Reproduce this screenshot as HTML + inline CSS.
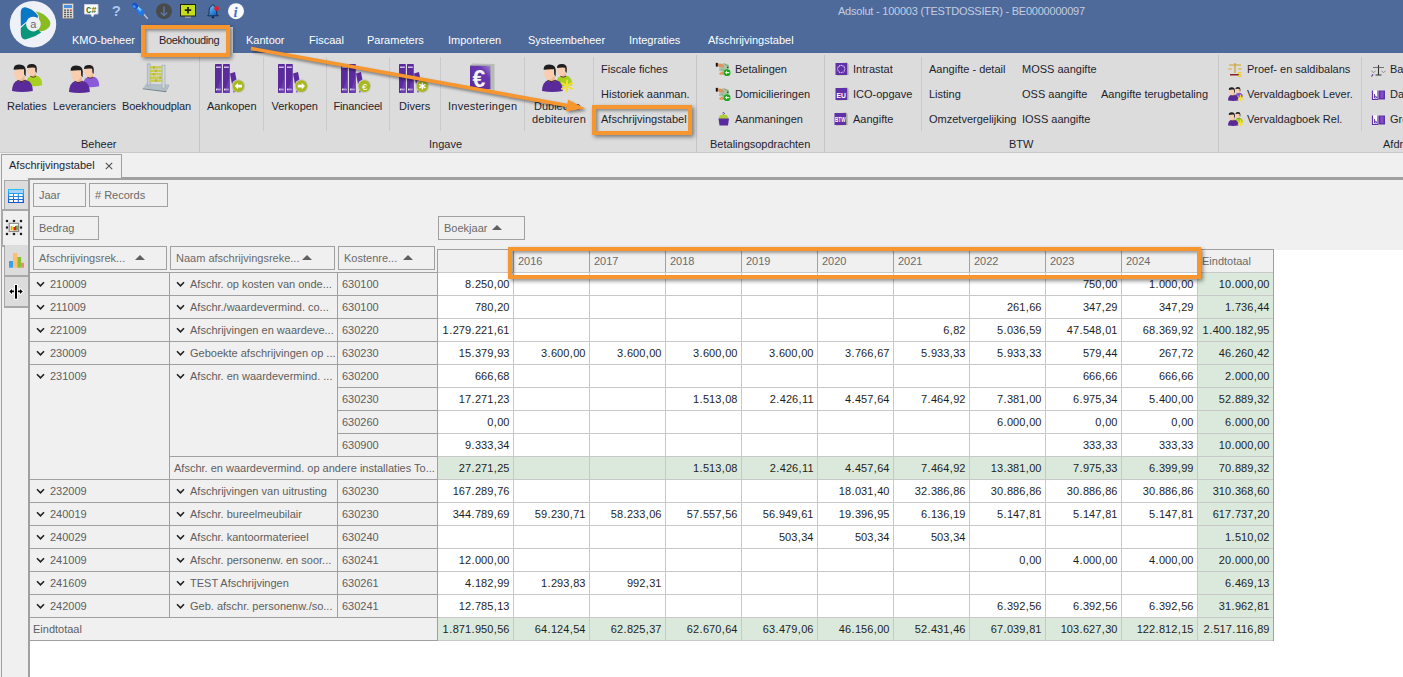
<!DOCTYPE html><html><head><meta charset="utf-8"><style>
*{box-sizing:border-box;margin:0;padding:0}
html,body{width:1403px;height:677px;overflow:hidden;background:#f0f0f0;font-family:"Liberation Sans", sans-serif;font-size:11px;color:#1e1e1e}
.a{position:absolute}
.t{position:absolute;white-space:nowrap;line-height:13px}
.n i{font-style:normal;padding:0 0.45px}
</style></head><body>
<div class="a" style="left:0;top:0;width:1403px;height:53px;background:#4d6a9b"></div>
<div class="a" style="left:0;top:53px;width:1403px;height:100px;background:#dcdcdc;border-bottom:1px solid #c8c8c8"></div>
<div class="t" style="left:72px;top:34px;color:#fff;font-size:11px">KMO-beheer</div>
<div class="t" style="left:246px;top:34px;color:#fff;font-size:11px">Kantoor</div>
<div class="t" style="left:309px;top:34px;color:#fff;font-size:11px">Fiscaal</div>
<div class="t" style="left:367px;top:34px;color:#fff;font-size:11px">Parameters</div>
<div class="t" style="left:448px;top:34px;color:#fff;font-size:11px">Importeren</div>
<div class="t" style="left:528px;top:34px;color:#fff;font-size:11px">Systeembeheer</div>
<div class="t" style="left:629px;top:34px;color:#fff;font-size:11px">Integraties</div>
<div class="t" style="left:708px;top:34px;color:#fff;font-size:11px">Afschrijvingstabel</div>
<div class="a" style="left:145px;top:27px;width:88px;height:27px;background:#dcdcdc"></div>
<div class="t" style="left:159px;top:34px;color:#1e1e2e;letter-spacing:-0.35px">Boekhouding</div>
<div class="t" style="left:838px;top:5px;color:#c4cde0;font-size:11px;letter-spacing:-0.22px">Adsolut - 100003 (TESTDOSSIER) - BE0000000097</div>
<div class="t" style="left:7px;top:100px;color:#1e1e2e;letter-spacing:0px">Relaties</div>
<div class="t" style="left:53px;top:100px;color:#1e1e2e;letter-spacing:0px">Leveranciers</div>
<div class="t" style="left:122px;top:100px;color:#1e1e2e;letter-spacing:-0.1px">Boekhoudplan</div>
<div class="t" style="left:207px;top:100px;color:#1e1e2e;letter-spacing:0px">Aankopen</div>
<div class="t" style="left:271.5px;top:100px;color:#1e1e2e;letter-spacing:0px">Verkopen</div>
<div class="t" style="left:333.5px;top:100px;color:#1e1e2e;letter-spacing:-0.15px">Financieel</div>
<div class="t" style="left:399px;top:100px;color:#1e1e2e;letter-spacing:0px">Divers</div>
<div class="t" style="left:448px;top:100px;color:#1e1e2e;letter-spacing:0.25px">Investeringen</div>
<div class="t" style="left:534px;top:100px;color:#1e1e2e;">Dubieuze</div>
<div class="t" style="left:532px;top:113px;color:#1e1e2e;letter-spacing:0.2px">debiteuren</div>
<div class="t" style="left:601px;top:63px;color:#1e1e2e;">Fiscale fiches</div>
<div class="t" style="left:601px;top:88px;color:#1e1e2e;">Historiek aanman.</div>
<div class="t" style="left:601px;top:113px;color:#1e1e2e;">Afschrijvingstabel</div>
<div class="t" style="left:735px;top:63px;color:#1e1e2e;">Betalingen</div>
<div class="t" style="left:735px;top:88px;color:#1e1e2e;">Domicilieringen</div>
<div class="t" style="left:735px;top:113px;color:#1e1e2e;">Aanmaningen</div>
<div class="t" style="left:853px;top:63px;color:#1e1e2e;">Intrastat</div>
<div class="t" style="left:853px;top:88px;color:#1e1e2e;">ICO-opgave</div>
<div class="t" style="left:853px;top:113px;color:#1e1e2e;">Aangifte</div>
<div class="t" style="left:929px;top:63px;color:#1e1e2e;">Aangifte - detail</div>
<div class="t" style="left:929px;top:88px;color:#1e1e2e;">Listing</div>
<div class="t" style="left:929px;top:113px;color:#1e1e2e;">Omzetvergelijking</div>
<div class="t" style="left:1022px;top:63px;color:#1e1e2e;">MOSS aangifte</div>
<div class="t" style="left:1022px;top:88px;color:#1e1e2e;">OSS aangifte</div>
<div class="t" style="left:1022px;top:113px;color:#1e1e2e;">IOSS aangifte</div>
<div class="t" style="left:1101px;top:88px;color:#1e1e2e;">Aangifte terugbetaling</div>
<div class="t" style="left:1247px;top:63px;color:#1e1e2e;">Proef- en saldibalans</div>
<div class="t" style="left:1247px;top:88px;color:#1e1e2e;">Vervaldagboek Lever.</div>
<div class="t" style="left:1247px;top:113px;color:#1e1e2e;">Vervaldagboek Rel.</div>
<div class="t" style="left:1390px;top:63px;color:#1e1e2e;">Balans</div>
<div class="t" style="left:1390px;top:88px;color:#1e1e2e;">Dagboeken</div>
<div class="t" style="left:1390px;top:113px;color:#1e1e2e;">Grootboek</div>
<div class="t" style="left:81px;top:138px;color:#1e1e2e;">Beheer</div>
<div class="t" style="left:429px;top:138px;color:#1e1e2e;">Ingave</div>
<div class="t" style="left:710px;top:138px;color:#1e1e2e;">Betalingsopdrachten</div>
<div class="t" style="left:1009px;top:138px;color:#1e1e2e;">BTW</div>
<div class="t" style="left:1383px;top:138px;color:#1e1e2e;">Afdrukken</div>
<div class="a" style="left:199px;top:55px;width:1px;height:97px;background:#c6c6c6"></div>
<div class="a" style="left:696px;top:55px;width:1px;height:97px;background:#c6c6c6"></div>
<div class="a" style="left:824px;top:55px;width:1px;height:97px;background:#c6c6c6"></div>
<div class="a" style="left:1218px;top:55px;width:1px;height:97px;background:#c6c6c6"></div>
<div class="a" style="left:263px;top:57px;width:1px;height:74px;background:#cacaca"></div>
<div class="a" style="left:326px;top:57px;width:1px;height:74px;background:#cacaca"></div>
<div class="a" style="left:389px;top:57px;width:1px;height:74px;background:#cacaca"></div>
<div class="a" style="left:440px;top:57px;width:1px;height:74px;background:#cacaca"></div>
<div class="a" style="left:524px;top:57px;width:1px;height:74px;background:#cacaca"></div>
<div class="a" style="left:593px;top:57px;width:1px;height:74px;background:#cacaca"></div>
<div class="a" style="left:921px;top:57px;width:1px;height:74px;background:#cacaca"></div>
<div class="a" style="left:1361px;top:57px;width:1px;height:74px;background:#cacaca"></div>
<svg class="a" style="left:8px;top:0px;overflow:visible" width="50" height="50" viewBox="0 0 50 50"><circle cx="25" cy="24.2" r="23.2" fill="#eef1f8"/><path d="M12.8,26.3 L12.7,13.5 Q12.6,5.4 19.8,7.9 Q26.5,10.2 29.6,15.2 Q30.5,16.8 29.38,17.88 A7.3,7.3 0 0 0 18.46,21.74 L12.8,26.3 Z" fill="#0b78c6"/><path d="M27.6,11.2 Q36.5,13 41.2,20 Q43.6,23.5 41.2,27 Q36.5,32.5 27,31.4 L28.13,30.77 A7.3,7.3 0 0 0 30.99,19.31 Q31.5,15 27.6,11.2 Z" fill="#89bc22"/><path d="M18.17,22.98 L12.8,27.9 L12.8,33 Q13,41.6 20.5,38.6 Q28,36.2 33.2,32.4 Q31.8,31.5 30.09,29.59 A7.3,7.3 0 0 1 18.17,22.98 Z" fill="#09967a"/><text x="25.4" y="27.8" text-anchor="middle" font-family="Liberation Sans" font-size="11" fill="#6a6a6a">a</text></svg>
<svg class="a" style="left:62px;top:3px;overflow:visible" width="12" height="16" viewBox="0 0 12 16"><rect x="0.5" y="0.5" width="11" height="15" rx="1" fill="#dcdcdc" stroke="#8a8a8a"/><rect x="2" y="2" width="8" height="3" fill="#4a90e0"/><rect x="2.0" y="6.5" width="2" height="1.3" fill="#555"/><rect x="4.9" y="6.5" width="2" height="1.3" fill="#555"/><rect x="7.8" y="6.5" width="2" height="1.3" fill="#e03030"/><rect x="2.0" y="8.7" width="2" height="1.3" fill="#555"/><rect x="4.9" y="8.7" width="2" height="1.3" fill="#555"/><rect x="7.8" y="8.7" width="2" height="1.3" fill="#555"/><rect x="2.0" y="10.9" width="2" height="1.3" fill="#555"/><rect x="4.9" y="10.9" width="2" height="1.3" fill="#555"/><rect x="7.8" y="10.9" width="2" height="1.3" fill="#555"/><rect x="2.0" y="13.1" width="2" height="1.3" fill="#555"/><rect x="4.9" y="13.1" width="2" height="1.3" fill="#555"/><rect x="7.8" y="13.1" width="2" height="1.3" fill="#555"/></svg><svg class="a" style="left:84px;top:4px;overflow:visible" width="15" height="14" viewBox="0 0 15 14"><path d="M0.5,0.5 H14 V10 H10.5 L8.5,13 L6.5,10 H0.5 Z" fill="#fff" stroke="#c8d0e8"/><text x="2" y="8.8" textLength="10.5" lengthAdjust="spacingAndGlyphs" font-family="Liberation Mono" font-weight="bold" font-size="9.5" fill="#467412">C#</text></svg><svg class="a" style="left:112px;top:4px;overflow:visible" width="9" height="13" viewBox="0 0 9 13"><text x="4.3" y="12.3" text-anchor="middle" font-family="Liberation Sans" font-weight="bold" font-size="15" fill="#a8c6ee">?</text></svg><svg class="a" style="left:128px;top:0px;overflow:visible" width="24" height="22" viewBox="0 0 24 22"><line x1="15" y1="13.3" x2="19.7" y2="18.7" stroke="#c8c8c8" stroke-width="1.3"/><ellipse cx="12.5" cy="11.6" rx="4.6" ry="2.9" transform="rotate(45 12.5 11.6)" fill="#1e78e8"/><path d="M8.5,6.5 L13.2,11" stroke="#48a8f8" stroke-width="3"/><path d="M9.5,6.8 L12.5,9.8" stroke="#e0f4ff" stroke-width="1"/><ellipse cx="7.1" cy="5.8" rx="3.2" ry="2.7" transform="rotate(45 7.1 5.8)" fill="#1650d0"/><ellipse cx="6.2" cy="6.6" rx="1.8" ry="1.4" transform="rotate(45 6.2 6.6)" fill="#3a90f0"/></svg><svg class="a" style="left:156px;top:3px;overflow:visible" width="16" height="17" viewBox="0 0 16 17"><circle cx="8" cy="8.2" r="8" fill="#4a4a4a"/><path d="M8,3.5 V12.5 M4.8,9.5 L8,12.7 L11.2,9.5" stroke="#5a7bb0" stroke-width="1.3" fill="none"/></svg><svg class="a" style="left:180px;top:4px;overflow:visible" width="16" height="14" viewBox="0 0 16 14"><rect x="0.5" y="0.5" width="15" height="11.5" fill="#c4de1c" stroke="#20200c"/><path d="M8,3 V9.5 M4.8,6.2 H11.2" stroke="#20200c" stroke-width="1.8"/><rect x="5" y="12.7" width="6" height="1.2" fill="#a0a0a0"/></svg><svg class="a" style="left:207px;top:4px;overflow:visible" width="12" height="15" viewBox="0 0 12 15"><defs><linearGradient id="bg1" x1="0" y1="0" x2="1" y2="1"><stop offset="0" stop-color="#9ad4ff"/><stop offset="0.5" stop-color="#3a90e0"/><stop offset="1" stop-color="#1050a8"/></linearGradient></defs><path d="M5.8,0.6 L6.6,1.6 Q9.6,2.6 9.7,6.2 L9.8,10.2 L11.2,11.8 H0.6 L2,10.2 L2.1,6.2 Q2.2,2.6 5.2,1.6 Z" fill="url(#bg1)" stroke="#0a2848" stroke-width="0.9"/><ellipse cx="5.9" cy="13.3" rx="1.4" ry="1.1" fill="#0a2848"/><circle cx="9.6" cy="4.4" r="2.3" fill="#e81c28"/></svg><svg class="a" style="left:228px;top:3px;overflow:visible" width="16" height="17" viewBox="0 0 16 17"><circle cx="8" cy="8.2" r="8" fill="#fafafa"/><text x="7.6" y="14.2" text-anchor="middle" font-family="Liberation Serif" font-style="italic" font-weight="bold" font-size="14.5" fill="#4a6cd0">i</text></svg>
<svg class="a" style="left:8px;top:58px;overflow:visible" width="40.0" height="40.0" viewBox="0 0 40.0 40.0"><g transform="scale(1.0)"><path d="M17.8,27.5 Q17.8,19.5 23,18 L30,18 Q34.2,20.5 34.2,27.2 Q26,29 17.8,27.5 Z" fill="#a8d020"/><rect x="22.5" y="14" width="5.5" height="5" fill="#eeb48c"/><path d="M22.3,18.2 Q25,20.3 28.2,18.2" stroke="#302020" stroke-width="0.8" fill="none"/><ellipse cx="23.6" cy="12.4" rx="4.4" ry="5.6" fill="#f8cdb0"/><path d="M19,9.2 Q19.5,5.8 24,6 Q28.8,6.2 28.8,10.5 L28.6,15 L27.4,13.5 L27.2,9.8 Q24,9.3 19.2,10 Z" fill="#1e1e1e"/><path d="M4,33 Q4,24.5 9.8,22.2 L18.5,22.2 Q24.8,24 24.8,33 Q14,34.8 4,33 Z" fill="#5a2a9a"/><rect x="10.2" y="18" width="6.5" height="5.3" fill="#eeb48c"/><path d="M9.6,22.3 Q13,25.2 17.6,22.2" stroke="#302020" stroke-width="0.9" fill="none"/><ellipse cx="11.2" cy="15.6" rx="5.1" ry="6.3" fill="#f8cdb0"/><path d="M5.6,11 Q5.8,6.6 11.5,6.6 Q17.6,6.8 17.8,12.5 L17.6,18.5 L16.2,16.5 L16,11.3 Q11,10.8 5.8,11.8 Z" fill="#1e1e1e"/></g></svg>
<svg class="a" style="left:65px;top:59px;overflow:visible" width="40.0" height="40.0" viewBox="0 0 40.0 40.0"><g transform="scale(1.0)"><path d="M17.8,27.5 Q17.8,19.5 23,18 L30,18 Q34.2,20.5 34.2,27.2 Q26,29 17.8,27.5 Z" fill="#8a5ad8"/><rect x="22.5" y="14" width="5.5" height="5" fill="#eeb48c"/><path d="M22.3,18.2 Q25,20.3 28.2,18.2" stroke="#302020" stroke-width="0.8" fill="none"/><ellipse cx="23.6" cy="12.4" rx="4.4" ry="5.6" fill="#f8cdb0"/><path d="M19,9.2 Q19.5,5.8 24,6 Q28.8,6.2 28.8,10.5 L28.6,15 L27.4,13.5 L27.2,9.8 Q24,9.3 19.2,10 Z" fill="#1e1e1e"/><path d="M4,33 Q4,24.5 9.8,22.2 L18.5,22.2 Q24.8,24 24.8,33 Q14,34.8 4,33 Z" fill="#5a2a9a"/><rect x="10.2" y="18" width="6.5" height="5.3" fill="#eeb48c"/><path d="M9.6,22.3 Q13,25.2 17.6,22.2" stroke="#302020" stroke-width="0.9" fill="none"/><ellipse cx="11.2" cy="15.6" rx="5.1" ry="6.3" fill="#f8cdb0"/><path d="M5.6,11 Q5.8,6.6 11.5,6.6 Q17.6,6.8 17.8,12.5 L17.6,18.5 L16.2,16.5 L16,11.3 Q11,10.8 5.8,11.8 Z" fill="#1e1e1e"/></g></svg>
<svg class="a" style="left:136px;top:58px;overflow:visible" width="40" height="40" viewBox="0 0 40 40"><path d="M6.8,30.2 L10.5,25.4 L33.1,26.5 L30,33.1 Z" fill="#b4c0c8"/><path d="M6.8,30.2 L30,33.1 L30,34.2 L6.8,31.3 Z" fill="#7a8690"/><path d="M30,33.1 L33.1,26.5 L33.1,27.6 L30,34.2 Z" fill="#8a969e"/><rect x="11.2" y="5.9" width="3" height="21.9" fill="#c4ccd4" stroke="#98a4ac" stroke-width="0.6"/><rect x="26" y="7.1" width="3" height="23" fill="#d0d8de" stroke="#98a4ac" stroke-width="0.6"/><ellipse cx="15.00" cy="9.4" rx="1.15" ry="1.45" fill="#c6cc44"/><ellipse cx="17.05" cy="9.4" rx="1.15" ry="1.45" fill="#c6cc44"/><rect x="17.75" y="8.200000000000001" width="0.9" height="2.4" fill="#8a3a18"/><ellipse cx="19.10" cy="9.4" rx="1.15" ry="1.45" fill="#c6cc44"/><ellipse cx="21.15" cy="9.4" rx="1.15" ry="1.45" fill="#c6cc44"/><ellipse cx="23.20" cy="9.4" rx="1.15" ry="1.45" fill="#c6cc44"/><ellipse cx="25.25" cy="9.4" rx="1.15" ry="1.45" fill="#c6cc44"/><ellipse cx="15.00" cy="12.9" rx="1.15" ry="1.45" fill="#c6cc44"/><ellipse cx="17.05" cy="12.9" rx="1.15" ry="1.45" fill="#c6cc44"/><ellipse cx="19.10" cy="12.9" rx="1.15" ry="1.45" fill="#c6cc44"/><rect x="19.80" y="11.700000000000001" width="0.9" height="2.4" fill="#8a3a18"/><ellipse cx="21.15" cy="12.9" rx="1.15" ry="1.45" fill="#c6cc44"/><ellipse cx="23.20" cy="12.9" rx="1.15" ry="1.45" fill="#c6cc44"/><ellipse cx="25.25" cy="12.9" rx="1.15" ry="1.45" fill="#c6cc44"/><ellipse cx="15.00" cy="16.2" rx="1.15" ry="1.45" fill="#c6cc44"/><ellipse cx="17.05" cy="16.2" rx="1.15" ry="1.45" fill="#c6cc44"/><rect x="17.75" y="15.0" width="0.9" height="2.4" fill="#8a3a18"/><ellipse cx="19.10" cy="16.2" rx="1.15" ry="1.45" fill="#c6cc44"/><ellipse cx="21.15" cy="16.2" rx="1.15" ry="1.45" fill="#c6cc44"/><ellipse cx="23.20" cy="16.2" rx="1.15" ry="1.45" fill="#c6cc44"/><ellipse cx="25.25" cy="16.2" rx="1.15" ry="1.45" fill="#c6cc44"/><ellipse cx="15.00" cy="19.7" rx="1.15" ry="1.45" fill="#c6cc44"/><ellipse cx="17.05" cy="19.7" rx="1.15" ry="1.45" fill="#c6cc44"/><ellipse cx="19.10" cy="19.7" rx="1.15" ry="1.45" fill="#c6cc44"/><ellipse cx="21.15" cy="19.7" rx="1.15" ry="1.45" fill="#c6cc44"/><ellipse cx="23.20" cy="19.7" rx="1.15" ry="1.45" fill="#c6cc44"/><rect x="23.90" y="18.5" width="0.9" height="2.4" fill="#8a3a18"/><ellipse cx="25.25" cy="19.7" rx="1.15" ry="1.45" fill="#c6cc44"/><ellipse cx="15.00" cy="22.7" rx="1.15" ry="1.45" fill="#c6cc44"/><ellipse cx="17.05" cy="22.7" rx="1.15" ry="1.45" fill="#c6cc44"/><ellipse cx="19.10" cy="22.7" rx="1.15" ry="1.45" fill="#c6cc44"/><rect x="19.80" y="21.5" width="0.9" height="2.4" fill="#8a3a18"/><ellipse cx="21.15" cy="22.7" rx="1.15" ry="1.45" fill="#c6cc44"/><ellipse cx="23.20" cy="22.7" rx="1.15" ry="1.45" fill="#c6cc44"/><ellipse cx="25.25" cy="22.7" rx="1.15" ry="1.45" fill="#c6cc44"/></svg>
<svg class="a" style="left:210px;top:58px;overflow:visible" width="40" height="40" viewBox="0 0 40 40"><rect x="5" y="5.9" width="6.8" height="29" rx="0.6" fill="#5b2b9e"/><rect x="6" y="8.6" width="4.8" height="1.2" fill="#e8e0f4"/><rect x="6" y="30.6" width="4.8" height="1.8" fill="#e8e0f4"/><path d="M11.8,18 L11.8,34.9 L6,34.9 Z" fill="#7a4ec0" opacity=".5"/><rect x="13" y="5.9" width="6.8" height="29" rx="0.6" fill="#5b2b9e"/><rect x="14" y="8.6" width="4.8" height="1.2" fill="#e8e0f4"/><rect x="14" y="30.6" width="4.8" height="1.8" fill="#e8e0f4"/><path d="M19.8,18 L19.8,34.9 L14,34.9 Z" fill="#7a4ec0" opacity=".5"/><path d="M20,15.5 L25,14 L28.5,33 L23.5,34.5 Z" fill="#5b2b9e"/><circle cx="28.4" cy="28.1" r="6.8" fill="#c8c8c0"/><circle cx="28.4" cy="28.1" r="5.8" fill="#a9b81e"/><path d="M24.8,28.1 L28,25 V26.8 H32 V29.4 H28 V31.2 Z" fill="#fff"/></svg>
<svg class="a" style="left:273px;top:58px;overflow:visible" width="40" height="40" viewBox="0 0 40 40"><rect x="5" y="5.9" width="6.8" height="29" rx="0.6" fill="#5b2b9e"/><rect x="6" y="8.6" width="4.8" height="1.2" fill="#e8e0f4"/><rect x="6" y="30.6" width="4.8" height="1.8" fill="#e8e0f4"/><path d="M11.8,18 L11.8,34.9 L6,34.9 Z" fill="#7a4ec0" opacity=".5"/><rect x="13" y="5.9" width="6.8" height="29" rx="0.6" fill="#5b2b9e"/><rect x="14" y="8.6" width="4.8" height="1.2" fill="#e8e0f4"/><rect x="14" y="30.6" width="4.8" height="1.8" fill="#e8e0f4"/><path d="M19.8,18 L19.8,34.9 L14,34.9 Z" fill="#7a4ec0" opacity=".5"/><path d="M20,15.5 L25,14 L28.5,33 L23.5,34.5 Z" fill="#5b2b9e"/><circle cx="28.4" cy="28.1" r="6.8" fill="#c8c8c0"/><circle cx="28.4" cy="28.1" r="5.8" fill="#a9b81e"/><path d="M32,28.1 L28.8,25 V26.8 H24.8 V29.4 H28.8 V31.2 Z" fill="#fff"/></svg>
<svg class="a" style="left:336px;top:58px;overflow:visible" width="40" height="40" viewBox="0 0 40 40"><rect x="5" y="5.9" width="6.8" height="29" rx="0.6" fill="#5b2b9e"/><rect x="6" y="8.6" width="4.8" height="1.2" fill="#e8e0f4"/><rect x="6" y="30.6" width="4.8" height="1.8" fill="#e8e0f4"/><path d="M11.8,18 L11.8,34.9 L6,34.9 Z" fill="#7a4ec0" opacity=".5"/><rect x="13" y="5.9" width="6.8" height="29" rx="0.6" fill="#5b2b9e"/><rect x="14" y="8.6" width="4.8" height="1.2" fill="#e8e0f4"/><rect x="14" y="30.6" width="4.8" height="1.8" fill="#e8e0f4"/><path d="M19.8,18 L19.8,34.9 L14,34.9 Z" fill="#7a4ec0" opacity=".5"/><path d="M20,15.5 L25,14 L28.5,33 L23.5,34.5 Z" fill="#5b2b9e"/><circle cx="28.4" cy="28.1" r="6.8" fill="#c8c8c0"/><circle cx="28.4" cy="28.1" r="5.8" fill="#a9b81e"/><text x="28.6" y="31.8" text-anchor="middle" font-family="Liberation Sans" font-size="9.5" fill="#fff">&#8364;</text></svg>
<svg class="a" style="left:394px;top:58px;overflow:visible" width="40" height="40" viewBox="0 0 40 40"><rect x="5" y="5.9" width="6.8" height="29" rx="0.6" fill="#5b2b9e"/><rect x="6" y="8.6" width="4.8" height="1.2" fill="#e8e0f4"/><rect x="6" y="30.6" width="4.8" height="1.8" fill="#e8e0f4"/><path d="M11.8,18 L11.8,34.9 L6,34.9 Z" fill="#7a4ec0" opacity=".5"/><rect x="13" y="5.9" width="6.8" height="29" rx="0.6" fill="#5b2b9e"/><rect x="14" y="8.6" width="4.8" height="1.2" fill="#e8e0f4"/><rect x="14" y="30.6" width="4.8" height="1.8" fill="#e8e0f4"/><path d="M19.8,18 L19.8,34.9 L14,34.9 Z" fill="#7a4ec0" opacity=".5"/><path d="M20,15.5 L25,14 L28.5,33 L23.5,34.5 Z" fill="#5b2b9e"/><circle cx="28.4" cy="28.1" r="6.8" fill="#c8c8c0"/><circle cx="28.4" cy="28.1" r="5.8" fill="#a9b81e"/><g stroke="#fff" stroke-width="1.3"><path d="M28.4,24.6 V31.6 M25.3,26.3 L31.5,29.9 M25.3,29.9 L31.5,26.3"/></g></svg>
<svg class="a" style="left:462px;top:58px;overflow:visible" width="40" height="40" viewBox="0 0 40 40"><path d="M8,7.7 L10,5.6 L32.5,5.9 L32.5,32 L28.4,31.3 Z" fill="#b4bcb4"/><defs><linearGradient id="ig" x1="0" y1="1" x2="1" y2="0"><stop offset="0" stop-color="#5a2898"/><stop offset="0.7" stop-color="#6838b0"/><stop offset="1" stop-color="#a080d0"/></linearGradient></defs><rect x="8" y="7.7" width="20.4" height="23.6" fill="url(#ig)"/><text x="16.8" y="28.8" text-anchor="middle" font-family="Liberation Sans" font-weight="bold" font-size="23" fill="#f4f4f4">&#8364;</text></svg>
<svg class="a" style="left:538px;top:58px;overflow:visible" width="40.0" height="40.0" viewBox="0 0 40.0 40.0"><g transform="scale(1.0)"><path d="M17.8,27.5 Q17.8,19.5 23,18 L30,18 Q34.2,20.5 34.2,27.2 Q26,29 17.8,27.5 Z" fill="#a8d020"/><rect x="22.5" y="14" width="5.5" height="5" fill="#eeb48c"/><path d="M22.3,18.2 Q25,20.3 28.2,18.2" stroke="#302020" stroke-width="0.8" fill="none"/><ellipse cx="23.6" cy="12.4" rx="4.4" ry="5.6" fill="#f8cdb0"/><path d="M19,9.2 Q19.5,5.8 24,6 Q28.8,6.2 28.8,10.5 L28.6,15 L27.4,13.5 L27.2,9.8 Q24,9.3 19.2,10 Z" fill="#1e1e1e"/><path d="M4,33 Q4,24.5 9.8,22.2 L18.5,22.2 Q24.8,24 24.8,33 Q14,34.8 4,33 Z" fill="#5a2a9a"/><rect x="10.2" y="18" width="6.5" height="5.3" fill="#eeb48c"/><path d="M9.6,22.3 Q13,25.2 17.6,22.2" stroke="#302020" stroke-width="0.9" fill="none"/><ellipse cx="11.2" cy="15.6" rx="5.1" ry="6.3" fill="#f8cdb0"/><path d="M5.6,11 Q5.8,6.6 11.5,6.6 Q17.6,6.8 17.8,12.5 L17.6,18.5 L16.2,16.5 L16,11.3 Q11,10.8 5.8,11.8 Z" fill="#1e1e1e"/><g stroke="#f0e030" stroke-width="2" stroke-linecap="round"><path d="M29,22.5 V33.5 M24,25.2 L34,30.8 M24,30.8 L34,25.2"/></g></g></svg>
<svg class="a" style="left:712px;top:60px;overflow:visible" width="20" height="18" viewBox="0 0 20 18"><path d="M7.5,5 L12,3 L17,5 L16.5,9 L12,12 L7,11 Z" fill="#a8c4a4"/><path d="M12.5,4 L16.5,6 M9,9 L12,10.5" stroke="#7aa07a" stroke-width="0.8"/><circle cx="15.8" cy="7.3" r="0.9" fill="#2a4a2a"/><rect x="3.8" y="2.8" width="2.1" height="4" rx="0.8" fill="#111"/><path d="M5.9,3.6 Q9,3.2 11.5,5 Q12.5,6.5 11.5,7.4 L8,7 L5.9,6.3 Z" fill="#e0925c"/><path d="M7,13.5 Q9,11.5 11.5,11.8 L12.5,14.8 L8,14.8 Z" fill="#e0925c"/><circle cx="15.1" cy="12.7" r="3.4" fill="#1aa81a"/><path d="M13,12.6 L15,10.8 V11.9 H17.3 V13.3 H15 V14.4 Z" fill="#e8f8e8"/></svg>
<svg class="a" style="left:712px;top:85px;overflow:visible" width="20" height="18" viewBox="0 0 20 18"><path d="M7.5,5 L12,3 L17,5 L16.5,9 L12,12 L7,11 Z" fill="#a8c4a4"/><path d="M12.5,4 L16.5,6 M9,9 L12,10.5" stroke="#7aa07a" stroke-width="0.8"/><circle cx="15.8" cy="7.3" r="0.9" fill="#2a4a2a"/><rect x="3.8" y="2.8" width="2.1" height="4" rx="0.8" fill="#111"/><path d="M5.9,3.6 Q9,3.2 11.5,5 Q12.5,6.5 11.5,7.4 L8,7 L5.9,6.3 Z" fill="#e0925c"/><path d="M7,13.5 Q9,11.5 11.5,11.8 L12.5,14.8 L8,14.8 Z" fill="#e0925c"/><circle cx="15.1" cy="12.7" r="3.4" fill="#1aa81a"/><path d="M13,12.6 L15,10.8 V11.9 H17.3 V13.3 H15 V14.4 Z" fill="#e8f8e8"/></svg>
<svg class="a" style="left:718px;top:112px;overflow:visible" width="12" height="14" viewBox="0 0 12 14"><ellipse cx="5.5" cy="6" rx="4.6" ry="3.5" fill="#b0d030"/><path d="M0.5,6.5 H11 L10,13.5 H1.5 Z" fill="#5a2aa0"/><path d="M4.5,1 Q6,0 6.5,1.5 L5.5,2.5" stroke="#5a2aa0" stroke-width="1" fill="none"/></svg>
<svg class="a" style="left:835px;top:62px;overflow:visible" width="14" height="14" viewBox="0 0 14 14"><path d="M1,1.5 L12,0.5 L13.5,2 L13.5,13 L2,13.5 Z" fill="#a0a890"/><rect x="0.5" y="1" width="11.5" height="12" fill="#6030a8"/><circle cx="9.80" cy="7.00" r="0.6" fill="#fff"/><circle cx="9.32" cy="8.80" r="0.6" fill="#fff"/><circle cx="8.00" cy="10.12" r="0.6" fill="#fff"/><circle cx="6.20" cy="10.60" r="0.6" fill="#fff"/><circle cx="4.40" cy="10.12" r="0.6" fill="#fff"/><circle cx="3.08" cy="8.80" r="0.6" fill="#fff"/><circle cx="2.60" cy="7.00" r="0.6" fill="#fff"/><circle cx="3.08" cy="5.20" r="0.6" fill="#fff"/><circle cx="4.40" cy="3.88" r="0.6" fill="#fff"/><circle cx="6.20" cy="3.40" r="0.6" fill="#fff"/><circle cx="8.00" cy="3.88" r="0.6" fill="#fff"/><circle cx="9.32" cy="5.20" r="0.6" fill="#fff"/></svg>
<svg class="a" style="left:835px;top:87px;overflow:visible" width="14" height="14" viewBox="0 0 14 14"><path d="M1,1.5 L12,0.5 L13.5,2 L13.5,13 L2,13.5 Z" fill="#a0a890"/><rect x="0.5" y="1" width="11.5" height="12" fill="#6030a8"/><text x="1.5" y="10.5" textLength="9.5" lengthAdjust="spacingAndGlyphs" font-family="Liberation Sans" font-weight="bold" font-size="8" fill="#fff">EU</text></svg>
<svg class="a" style="left:834px;top:112px;overflow:visible" width="14" height="14" viewBox="0 0 14 14"><path d="M1,1.5 L12,0.5 L13.5,2 L13.5,13 L2,13.5 Z" fill="#a0a890"/><rect x="0.5" y="1" width="11.5" height="12" fill="#6030a8"/><text x="1" y="10" textLength="10.5" lengthAdjust="spacingAndGlyphs" font-family="Liberation Sans" font-weight="bold" font-size="7" fill="#fff">BTW</text></svg>
<svg class="a" style="left:1227px;top:62px;overflow:visible" width="16" height="16" viewBox="0 0 16 16"><path d="M8,1 V11" stroke="#d0a020" stroke-width="1.2"/><path d="M2,3 H14" stroke="#d0a020" stroke-width="1"/><path d="M0.5,6.5 Q3,9 5.5,6.5 Z M10.5,6.5 Q13,9 15.5,6.5 Z" fill="#e0b030"/><path d="M3,12 H12 V13.5 H3 Z" fill="#902020"/><text x="13" y="15" text-anchor="middle" font-family="Liberation Sans" font-weight="bold" font-size="8" fill="#f0d020">$</text></svg>
<svg class="a" style="left:1225.5px;top:83.5px;overflow:visible" width="20.0" height="20.0" viewBox="0 0 20.0 20.0"><g transform="scale(0.5)"><path d="M17.8,27.5 Q17.8,19.5 23,18 L30,18 Q34.2,20.5 34.2,27.2 Q26,29 17.8,27.5 Z" fill="#8a5ad8"/><rect x="22.5" y="14" width="5.5" height="5" fill="#eeb48c"/><path d="M22.3,18.2 Q25,20.3 28.2,18.2" stroke="#302020" stroke-width="0.8" fill="none"/><ellipse cx="23.6" cy="12.4" rx="4.4" ry="5.6" fill="#f8cdb0"/><path d="M19,9.2 Q19.5,5.8 24,6 Q28.8,6.2 28.8,10.5 L28.6,15 L27.4,13.5 L27.2,9.8 Q24,9.3 19.2,10 Z" fill="#1e1e1e"/><path d="M4,33 Q4,24.5 9.8,22.2 L18.5,22.2 Q24.8,24 24.8,33 Q14,34.8 4,33 Z" fill="#5a2a9a"/><rect x="10.2" y="18" width="6.5" height="5.3" fill="#eeb48c"/><path d="M9.6,22.3 Q13,25.2 17.6,22.2" stroke="#302020" stroke-width="0.9" fill="none"/><ellipse cx="11.2" cy="15.6" rx="5.1" ry="6.3" fill="#f8cdb0"/><path d="M5.6,11 Q5.8,6.6 11.5,6.6 Q17.6,6.8 17.8,12.5 L17.6,18.5 L16.2,16.5 L16,11.3 Q11,10.8 5.8,11.8 Z" fill="#1e1e1e"/><g stroke="#f0e030" stroke-width="2" stroke-linecap="round"><path d="M29,22.5 V33.5 M24,25.2 L34,30.8 M24,30.8 L34,25.2"/></g></g></svg>
<svg class="a" style="left:1225.5px;top:108.5px;overflow:visible" width="20.0" height="20.0" viewBox="0 0 20.0 20.0"><g transform="scale(0.5)"><path d="M17.8,27.5 Q17.8,19.5 23,18 L30,18 Q34.2,20.5 34.2,27.2 Q26,29 17.8,27.5 Z" fill="#a8d020"/><rect x="22.5" y="14" width="5.5" height="5" fill="#eeb48c"/><path d="M22.3,18.2 Q25,20.3 28.2,18.2" stroke="#302020" stroke-width="0.8" fill="none"/><ellipse cx="23.6" cy="12.4" rx="4.4" ry="5.6" fill="#f8cdb0"/><path d="M19,9.2 Q19.5,5.8 24,6 Q28.8,6.2 28.8,10.5 L28.6,15 L27.4,13.5 L27.2,9.8 Q24,9.3 19.2,10 Z" fill="#1e1e1e"/><path d="M4,33 Q4,24.5 9.8,22.2 L18.5,22.2 Q24.8,24 24.8,33 Q14,34.8 4,33 Z" fill="#5a2a9a"/><rect x="10.2" y="18" width="6.5" height="5.3" fill="#eeb48c"/><path d="M9.6,22.3 Q13,25.2 17.6,22.2" stroke="#302020" stroke-width="0.9" fill="none"/><ellipse cx="11.2" cy="15.6" rx="5.1" ry="6.3" fill="#f8cdb0"/><path d="M5.6,11 Q5.8,6.6 11.5,6.6 Q17.6,6.8 17.8,12.5 L17.6,18.5 L16.2,16.5 L16,11.3 Q11,10.8 5.8,11.8 Z" fill="#1e1e1e"/><g stroke="#f0e030" stroke-width="2" stroke-linecap="round"><path d="M29,22.5 V33.5 M24,25.2 L34,30.8 M24,30.8 L34,25.2"/></g></g></svg>
<svg class="a" style="left:1371px;top:64px;overflow:visible" width="15" height="13" viewBox="0 0 15 13"><path d="M7.5,1 V11 M4.5,11 H10.5" stroke="#333" stroke-width="1.1"/><path d="M2,3.5 H13" stroke="#555" stroke-width="0.8"/><path d="M0.5,7 Q2.5,10 4.5,7 M10.5,7 Q12.5,10 14.5,7" stroke="#777" stroke-width="0.8" fill="none"/><path d="M0,12.5 L1.5,10 L2.5,10.5 L1,12.8 Z" fill="#6030a8"/></svg>
<svg class="a" style="left:1372px;top:90px;overflow:visible" width="14" height="10" viewBox="0 0 14 10"><path d="M0.5,0.5 V9.5 H6 V0.5" stroke="#6030a8" stroke-width="1.2" fill="#fff"/><path d="M2.5,4 V8 H4.5 Q5,6 2.5,6" stroke="#6030a8" stroke-width="0.9" fill="none"/><rect x="7" y="0.5" width="6" height="9" fill="#6030a8"/><rect x="8.5" y="1.5" width="3" height="6.5" fill="#8050c8"/></svg>
<svg class="a" style="left:1372px;top:115px;overflow:visible" width="14" height="10" viewBox="0 0 14 10"><path d="M0.5,0.5 V9.5 H6 V0.5" stroke="#6030a8" stroke-width="1.2" fill="#fff"/><path d="M2.5,4 V8 H4.5 Q5,6 2.5,6" stroke="#6030a8" stroke-width="0.9" fill="none"/><rect x="7" y="0.5" width="6" height="9" fill="#6030a8"/><rect x="8.5" y="1.5" width="3" height="6.5" fill="#8050c8"/></svg>
<div class="a" style="left:1px;top:154px;width:121px;height:25px;border:1px solid #a0a0a0;border-bottom:none;background:#f0f0f0"></div>
<div class="t" style="left:9px;top:159px;color:#1e1e2e">Afschrijvingstabel</div>
<svg class="a" style="left:105px;top:162px" width="8" height="8" viewBox="0 0 8 8"><path d="M0.8,0.8 L7.2,7.2 M7.2,0.8 L0.8,7.2" stroke="#505050" stroke-width="1.1"/></svg>
<div class="a" style="left:1px;top:178px;width:1px;height:499px;background:#a0a0a0"></div>
<div class="a" style="left:4px;top:180px;width:25px;height:31px;background:#dcdcdc;border:1px solid #a8a8a8;border-bottom:2px solid #a8a8a8"></div>
<div class="a" style="left:1px;top:209px;width:28px;height:38px;background:#f0f0f0;border:2px solid #a8a8a8;border-right:none"></div>
<div class="a" style="left:4px;top:245px;width:25px;height:32px;background:#dcdcdc;border:1px solid #a8a8a8;border-top:none;border-bottom:2px solid #a8a8a8"></div>
<div class="a" style="left:4px;top:277px;width:25px;height:31px;background:#dcdcdc;border:1px solid #a8a8a8;border-top:none;border-bottom:2px solid #a8a8a8"></div>
<svg class="a" style="left:8px;top:189px;overflow:visible" width="16" height="14" viewBox="0 0 16 14"><defs><linearGradient id="tg" x1="0" y1="0" x2="0" y2="1"><stop offset="0" stop-color="#22c8f8"/><stop offset="1" stop-color="#1a50d0"/></linearGradient></defs><rect x="0" y="0" width="16" height="14" fill="url(#tg)"/><rect x="1" y="1" width="14" height="3" fill="#a8d0f8"/><rect x="1.2" y="5" width="3.8" height="2" fill="#fff"/><rect x="6.0" y="5" width="3.8" height="2" fill="#fff"/><rect x="10.8" y="5" width="3.8" height="2" fill="#fff"/><rect x="1.2" y="8" width="3.8" height="2" fill="#fff"/><rect x="6.0" y="8" width="3.8" height="2" fill="#fff"/><rect x="10.8" y="8" width="3.8" height="2" fill="#fff"/><rect x="1.2" y="11" width="3.8" height="2" fill="#fff"/><rect x="6.0" y="11" width="3.8" height="2" fill="#fff"/><rect x="10.8" y="11" width="3.8" height="2" fill="#fff"/></svg><svg class="a" style="left:6px;top:220px;overflow:visible" width="16" height="15" viewBox="0 0 16 15"><rect x="1" y="1" width="14" height="13" fill="none" stroke="#bbb" stroke-width="0.8" stroke-dasharray="1,1.5"/><rect x="-0.10000000000000009" y="-0.10000000000000009" width="2.2" height="2.2" fill="#1a1a1a"/><rect x="6.9" y="-0.10000000000000009" width="2.2" height="2.2" fill="#1a1a1a"/><rect x="13.9" y="-0.10000000000000009" width="2.2" height="2.2" fill="#1a1a1a"/><rect x="-0.10000000000000009" y="6.4" width="2.2" height="2.2" fill="#1a1a1a"/><rect x="13.9" y="6.4" width="2.2" height="2.2" fill="#1a1a1a"/><rect x="-0.10000000000000009" y="12.9" width="2.2" height="2.2" fill="#1a1a1a"/><rect x="6.9" y="12.9" width="2.2" height="2.2" fill="#1a1a1a"/><rect x="13.9" y="12.9" width="2.2" height="2.2" fill="#1a1a1a"/><rect x="3.2" y="3.3" width="9.4" height="8.2" fill="#fff" stroke="#8a8a8a" stroke-width="1.2"/><rect x="4.7" y="6" width="1.4" height="4.4" fill="#f0a020"/><rect x="6.1" y="6.5" width="1.4" height="3.9" fill="#e8d020"/><rect x="7.5" y="7" width="1.5" height="3.4" fill="#e82010"/><rect x="9" y="6" width="1.4" height="4.4" fill="#e82010"/><rect x="10.4" y="5.5" width="1.3" height="4.9" fill="#10a010"/></svg><svg class="a" style="left:9px;top:253px;overflow:visible" width="15" height="15" viewBox="0 0 15 15"><rect x="0" y="8" width="4" height="6.7" fill="#38a0f0"/><rect x="4" y="0" width="4.4" height="14.7" fill="#fcc070"/><rect x="8.4" y="4" width="3.7" height="10.7" fill="#88c030"/><rect x="12.1" y="9.8" width="2.9" height="4.9" fill="#f08a6a"/></svg><svg class="a" style="left:9px;top:284px;overflow:visible" width="14" height="16" viewBox="0 0 14 16"><g stroke="#fff" stroke-width="2" stroke-linejoin="round"><rect x="6" y="1" width="2" height="13.7"/><path d="M0.2,7.4 L3,4.9 V6.5 H5 V8.3 H3 V9.9 Z M13.8,7.4 L11,4.9 V6.5 H9 V8.3 H11 V9.9 Z"/></g><rect x="6" y="1" width="2" height="13.7" fill="#000"/><path d="M0.2,7.4 L3,4.9 V6.5 H5 V8.3 H3 V9.9 Z M13.8,7.4 L11,4.9 V6.5 H9 V8.3 H11 V9.9 Z" fill="#000"/></svg>
<div class="a" style="left:28px;top:178px;width:1375px;height:499px;border-left:2px solid #a0a0a0;border-top:2px solid #a0a0a0;background:#f0f0f0"></div>
<div class="a" style="left:122px;top:177px;width:1281px;height:1px;background:#a0a0a0"></div>
<div class="a" style="left:30px;top:640px;width:1373px;height:37px;background:#fff"></div>
<div class="a" style="left:1273px;top:250px;width:130px;height:427px;background:#fff"></div>
<div class="a" style="left:33px;top:183px;width:53px;height:24px;border:1px solid #a0a0a0;background:#f0f0f0"></div>
<div class="t" style="left:39px;top:189px;color:#6a6a6a">Jaar</div>
<div class="a" style="left:89px;top:183px;width:79px;height:24px;border:1px solid #a0a0a0;background:#f0f0f0"></div>
<div class="t" style="left:95px;top:189px;color:#6a6a6a"># Records</div>
<div class="a" style="left:33px;top:216px;width:66px;height:24px;border:1px solid #a0a0a0;background:#f0f0f0"></div>
<div class="t" style="left:39px;top:222px;color:#6a6a6a">Bedrag</div>
<div class="a" style="left:438px;top:216px;width:87px;height:24px;border:1px solid #a0a0a0;background:#f0f0f0"></div>
<div class="t" style="left:444px;top:222px;color:#6a6a6a">Boekjaar</div>
<div class="a" style="left:33px;top:246px;width:134px;height:24px;border:1px solid #a0a0a0;background:#f0f0f0"></div>
<div class="t" style="left:39px;top:252px;color:#6a6a6a">Afschrijvingsrek...</div>
<div class="a" style="left:170px;top:246px;width:165px;height:24px;border:1px solid #a0a0a0;background:#f0f0f0"></div>
<div class="t" style="left:176px;top:252px;color:#6a6a6a">Naam afschrijvingsreke...</div>
<div class="a" style="left:338px;top:246px;width:97px;height:24px;border:1px solid #a0a0a0;background:#f0f0f0"></div>
<div class="t" style="left:344px;top:252px;color:#6a6a6a">Kostenre...</div>
<div class="a" style="left:135px;top:255px;width:0;height:0;border-left:5px solid transparent;border-right:5px solid transparent;border-bottom:5px solid #606060"></div>
<div class="a" style="left:302px;top:255px;width:0;height:0;border-left:5px solid transparent;border-right:5px solid transparent;border-bottom:5px solid #606060"></div>
<div class="a" style="left:403px;top:255px;width:0;height:0;border-left:5px solid transparent;border-right:5px solid transparent;border-bottom:5px solid #606060"></div>
<div class="a" style="left:492px;top:225px;width:0;height:0;border-left:5px solid transparent;border-right:5px solid transparent;border-bottom:5px solid #606060"></div>
<div class="a" style="left:437px;top:249px;width:77px;height:24px;border:1px solid #a0a0a0;background:#f0f0f0"></div>
<div class="a" style="left:513px;top:249px;width:77px;height:24px;border:1px solid #a0a0a0;background:#f0f0f0"></div>
<div class="t" style="left:518px;top:255px;color:#6a6a6a">2016</div>
<div class="a" style="left:589px;top:249px;width:77px;height:24px;border:1px solid #a0a0a0;background:#f0f0f0"></div>
<div class="t" style="left:594px;top:255px;color:#6a6a6a">2017</div>
<div class="a" style="left:665px;top:249px;width:77px;height:24px;border:1px solid #a0a0a0;background:#f0f0f0"></div>
<div class="t" style="left:670px;top:255px;color:#6a6a6a">2018</div>
<div class="a" style="left:741px;top:249px;width:77px;height:24px;border:1px solid #a0a0a0;background:#f0f0f0"></div>
<div class="t" style="left:746px;top:255px;color:#6a6a6a">2019</div>
<div class="a" style="left:817px;top:249px;width:77px;height:24px;border:1px solid #a0a0a0;background:#f0f0f0"></div>
<div class="t" style="left:822px;top:255px;color:#6a6a6a">2020</div>
<div class="a" style="left:893px;top:249px;width:77px;height:24px;border:1px solid #a0a0a0;background:#f0f0f0"></div>
<div class="t" style="left:898px;top:255px;color:#6a6a6a">2021</div>
<div class="a" style="left:969px;top:249px;width:77px;height:24px;border:1px solid #a0a0a0;background:#f0f0f0"></div>
<div class="t" style="left:974px;top:255px;color:#6a6a6a">2022</div>
<div class="a" style="left:1045px;top:249px;width:77px;height:24px;border:1px solid #a0a0a0;background:#f0f0f0"></div>
<div class="t" style="left:1050px;top:255px;color:#6a6a6a">2023</div>
<div class="a" style="left:1121px;top:249px;width:77px;height:24px;border:1px solid #a0a0a0;background:#f0f0f0"></div>
<div class="t" style="left:1126px;top:255px;color:#6a6a6a">2024</div>
<div class="a" style="left:1197px;top:249px;width:77px;height:24px;border:1px solid #a0a0a0;background:#f0f0f0"></div>
<div class="t" style="left:1202px;top:255px;color:#6a6a6a">Eindtotaal</div>
<div class="a" style="left:30px;top:272px;width:407px;height:368px;background:#f0f0f0"></div>
<div class="a" style="left:437px;top:272px;width:77px;height:24px;border:1px solid #c8c8c8;background:#fff"></div>
<div class="a" style="left:513px;top:272px;width:77px;height:24px;border:1px solid #c8c8c8;background:#fff"></div>
<div class="a" style="left:589px;top:272px;width:77px;height:24px;border:1px solid #c8c8c8;background:#fff"></div>
<div class="a" style="left:665px;top:272px;width:77px;height:24px;border:1px solid #c8c8c8;background:#fff"></div>
<div class="a" style="left:741px;top:272px;width:77px;height:24px;border:1px solid #c8c8c8;background:#fff"></div>
<div class="a" style="left:817px;top:272px;width:77px;height:24px;border:1px solid #c8c8c8;background:#fff"></div>
<div class="a" style="left:893px;top:272px;width:77px;height:24px;border:1px solid #c8c8c8;background:#fff"></div>
<div class="a" style="left:969px;top:272px;width:77px;height:24px;border:1px solid #c8c8c8;background:#fff"></div>
<div class="a" style="left:1045px;top:272px;width:77px;height:24px;border:1px solid #c8c8c8;background:#fff"></div>
<div class="a" style="left:1121px;top:272px;width:77px;height:24px;border:1px solid #c8c8c8;background:#fff"></div>
<div class="a" style="left:1197px;top:272px;width:77px;height:24px;border:1px solid #c8c8c8;background:#dae9db"></div>
<div class="t n" style="left:437px;top:278px;width:72.5px;text-align:right;color:#1e1e1e">8<i>.</i>250<i>,</i>00</div>
<div class="t n" style="left:1045px;top:278px;width:72.5px;text-align:right;color:#1e1e1e">750<i>,</i>00</div>
<div class="t n" style="left:1121px;top:278px;width:72.5px;text-align:right;color:#1e1e1e">1<i>.</i>000<i>,</i>00</div>
<div class="t n" style="left:1197px;top:278px;width:72.5px;text-align:right;color:#1e1e1e">10<i>.</i>000<i>,</i>00</div>
<div class="a" style="left:437px;top:295px;width:77px;height:24px;border:1px solid #c8c8c8;background:#fff"></div>
<div class="a" style="left:513px;top:295px;width:77px;height:24px;border:1px solid #c8c8c8;background:#fff"></div>
<div class="a" style="left:589px;top:295px;width:77px;height:24px;border:1px solid #c8c8c8;background:#fff"></div>
<div class="a" style="left:665px;top:295px;width:77px;height:24px;border:1px solid #c8c8c8;background:#fff"></div>
<div class="a" style="left:741px;top:295px;width:77px;height:24px;border:1px solid #c8c8c8;background:#fff"></div>
<div class="a" style="left:817px;top:295px;width:77px;height:24px;border:1px solid #c8c8c8;background:#fff"></div>
<div class="a" style="left:893px;top:295px;width:77px;height:24px;border:1px solid #c8c8c8;background:#fff"></div>
<div class="a" style="left:969px;top:295px;width:77px;height:24px;border:1px solid #c8c8c8;background:#fff"></div>
<div class="a" style="left:1045px;top:295px;width:77px;height:24px;border:1px solid #c8c8c8;background:#fff"></div>
<div class="a" style="left:1121px;top:295px;width:77px;height:24px;border:1px solid #c8c8c8;background:#fff"></div>
<div class="a" style="left:1197px;top:295px;width:77px;height:24px;border:1px solid #c8c8c8;background:#dae9db"></div>
<div class="t n" style="left:437px;top:301px;width:72.5px;text-align:right;color:#1e1e1e">780<i>,</i>20</div>
<div class="t n" style="left:969px;top:301px;width:72.5px;text-align:right;color:#1e1e1e">261<i>,</i>66</div>
<div class="t n" style="left:1045px;top:301px;width:72.5px;text-align:right;color:#1e1e1e">347<i>,</i>29</div>
<div class="t n" style="left:1121px;top:301px;width:72.5px;text-align:right;color:#1e1e1e">347<i>,</i>29</div>
<div class="t n" style="left:1197px;top:301px;width:72.5px;text-align:right;color:#1e1e1e">1<i>.</i>736<i>,</i>44</div>
<div class="a" style="left:437px;top:318px;width:77px;height:24px;border:1px solid #c8c8c8;background:#fff"></div>
<div class="a" style="left:513px;top:318px;width:77px;height:24px;border:1px solid #c8c8c8;background:#fff"></div>
<div class="a" style="left:589px;top:318px;width:77px;height:24px;border:1px solid #c8c8c8;background:#fff"></div>
<div class="a" style="left:665px;top:318px;width:77px;height:24px;border:1px solid #c8c8c8;background:#fff"></div>
<div class="a" style="left:741px;top:318px;width:77px;height:24px;border:1px solid #c8c8c8;background:#fff"></div>
<div class="a" style="left:817px;top:318px;width:77px;height:24px;border:1px solid #c8c8c8;background:#fff"></div>
<div class="a" style="left:893px;top:318px;width:77px;height:24px;border:1px solid #c8c8c8;background:#fff"></div>
<div class="a" style="left:969px;top:318px;width:77px;height:24px;border:1px solid #c8c8c8;background:#fff"></div>
<div class="a" style="left:1045px;top:318px;width:77px;height:24px;border:1px solid #c8c8c8;background:#fff"></div>
<div class="a" style="left:1121px;top:318px;width:77px;height:24px;border:1px solid #c8c8c8;background:#fff"></div>
<div class="a" style="left:1197px;top:318px;width:77px;height:24px;border:1px solid #c8c8c8;background:#dae9db"></div>
<div class="t n" style="left:437px;top:324px;width:72.5px;text-align:right;color:#1e1e1e">1<i>.</i>279<i>.</i>221<i>,</i>61</div>
<div class="t n" style="left:893px;top:324px;width:72.5px;text-align:right;color:#1e1e1e">6<i>,</i>82</div>
<div class="t n" style="left:969px;top:324px;width:72.5px;text-align:right;color:#1e1e1e">5<i>.</i>036<i>,</i>59</div>
<div class="t n" style="left:1045px;top:324px;width:72.5px;text-align:right;color:#1e1e1e">47<i>.</i>548<i>,</i>01</div>
<div class="t n" style="left:1121px;top:324px;width:72.5px;text-align:right;color:#1e1e1e">68<i>.</i>369<i>,</i>92</div>
<div class="t n" style="left:1197px;top:324px;width:72.5px;text-align:right;color:#1e1e1e">1<i>.</i>400<i>.</i>182<i>,</i>95</div>
<div class="a" style="left:437px;top:341px;width:77px;height:24px;border:1px solid #c8c8c8;background:#fff"></div>
<div class="a" style="left:513px;top:341px;width:77px;height:24px;border:1px solid #c8c8c8;background:#fff"></div>
<div class="a" style="left:589px;top:341px;width:77px;height:24px;border:1px solid #c8c8c8;background:#fff"></div>
<div class="a" style="left:665px;top:341px;width:77px;height:24px;border:1px solid #c8c8c8;background:#fff"></div>
<div class="a" style="left:741px;top:341px;width:77px;height:24px;border:1px solid #c8c8c8;background:#fff"></div>
<div class="a" style="left:817px;top:341px;width:77px;height:24px;border:1px solid #c8c8c8;background:#fff"></div>
<div class="a" style="left:893px;top:341px;width:77px;height:24px;border:1px solid #c8c8c8;background:#fff"></div>
<div class="a" style="left:969px;top:341px;width:77px;height:24px;border:1px solid #c8c8c8;background:#fff"></div>
<div class="a" style="left:1045px;top:341px;width:77px;height:24px;border:1px solid #c8c8c8;background:#fff"></div>
<div class="a" style="left:1121px;top:341px;width:77px;height:24px;border:1px solid #c8c8c8;background:#fff"></div>
<div class="a" style="left:1197px;top:341px;width:77px;height:24px;border:1px solid #c8c8c8;background:#dae9db"></div>
<div class="t n" style="left:437px;top:347px;width:72.5px;text-align:right;color:#1e1e1e">15<i>.</i>379<i>,</i>93</div>
<div class="t n" style="left:513px;top:347px;width:72.5px;text-align:right;color:#1e1e1e">3<i>.</i>600<i>,</i>00</div>
<div class="t n" style="left:589px;top:347px;width:72.5px;text-align:right;color:#1e1e1e">3<i>.</i>600<i>,</i>00</div>
<div class="t n" style="left:665px;top:347px;width:72.5px;text-align:right;color:#1e1e1e">3<i>.</i>600<i>,</i>00</div>
<div class="t n" style="left:741px;top:347px;width:72.5px;text-align:right;color:#1e1e1e">3<i>.</i>600<i>,</i>00</div>
<div class="t n" style="left:817px;top:347px;width:72.5px;text-align:right;color:#1e1e1e">3<i>.</i>766<i>,</i>67</div>
<div class="t n" style="left:893px;top:347px;width:72.5px;text-align:right;color:#1e1e1e">5<i>.</i>933<i>,</i>33</div>
<div class="t n" style="left:969px;top:347px;width:72.5px;text-align:right;color:#1e1e1e">5<i>.</i>933<i>,</i>33</div>
<div class="t n" style="left:1045px;top:347px;width:72.5px;text-align:right;color:#1e1e1e">579<i>,</i>44</div>
<div class="t n" style="left:1121px;top:347px;width:72.5px;text-align:right;color:#1e1e1e">267<i>,</i>72</div>
<div class="t n" style="left:1197px;top:347px;width:72.5px;text-align:right;color:#1e1e1e">46<i>.</i>260<i>,</i>42</div>
<div class="a" style="left:437px;top:364px;width:77px;height:24px;border:1px solid #c8c8c8;background:#fff"></div>
<div class="a" style="left:513px;top:364px;width:77px;height:24px;border:1px solid #c8c8c8;background:#fff"></div>
<div class="a" style="left:589px;top:364px;width:77px;height:24px;border:1px solid #c8c8c8;background:#fff"></div>
<div class="a" style="left:665px;top:364px;width:77px;height:24px;border:1px solid #c8c8c8;background:#fff"></div>
<div class="a" style="left:741px;top:364px;width:77px;height:24px;border:1px solid #c8c8c8;background:#fff"></div>
<div class="a" style="left:817px;top:364px;width:77px;height:24px;border:1px solid #c8c8c8;background:#fff"></div>
<div class="a" style="left:893px;top:364px;width:77px;height:24px;border:1px solid #c8c8c8;background:#fff"></div>
<div class="a" style="left:969px;top:364px;width:77px;height:24px;border:1px solid #c8c8c8;background:#fff"></div>
<div class="a" style="left:1045px;top:364px;width:77px;height:24px;border:1px solid #c8c8c8;background:#fff"></div>
<div class="a" style="left:1121px;top:364px;width:77px;height:24px;border:1px solid #c8c8c8;background:#fff"></div>
<div class="a" style="left:1197px;top:364px;width:77px;height:24px;border:1px solid #c8c8c8;background:#dae9db"></div>
<div class="t n" style="left:437px;top:370px;width:72.5px;text-align:right;color:#1e1e1e">666<i>,</i>68</div>
<div class="t n" style="left:1045px;top:370px;width:72.5px;text-align:right;color:#1e1e1e">666<i>,</i>66</div>
<div class="t n" style="left:1121px;top:370px;width:72.5px;text-align:right;color:#1e1e1e">666<i>,</i>66</div>
<div class="t n" style="left:1197px;top:370px;width:72.5px;text-align:right;color:#1e1e1e">2<i>.</i>000<i>,</i>00</div>
<div class="a" style="left:437px;top:387px;width:77px;height:24px;border:1px solid #c8c8c8;background:#fff"></div>
<div class="a" style="left:513px;top:387px;width:77px;height:24px;border:1px solid #c8c8c8;background:#fff"></div>
<div class="a" style="left:589px;top:387px;width:77px;height:24px;border:1px solid #c8c8c8;background:#fff"></div>
<div class="a" style="left:665px;top:387px;width:77px;height:24px;border:1px solid #c8c8c8;background:#fff"></div>
<div class="a" style="left:741px;top:387px;width:77px;height:24px;border:1px solid #c8c8c8;background:#fff"></div>
<div class="a" style="left:817px;top:387px;width:77px;height:24px;border:1px solid #c8c8c8;background:#fff"></div>
<div class="a" style="left:893px;top:387px;width:77px;height:24px;border:1px solid #c8c8c8;background:#fff"></div>
<div class="a" style="left:969px;top:387px;width:77px;height:24px;border:1px solid #c8c8c8;background:#fff"></div>
<div class="a" style="left:1045px;top:387px;width:77px;height:24px;border:1px solid #c8c8c8;background:#fff"></div>
<div class="a" style="left:1121px;top:387px;width:77px;height:24px;border:1px solid #c8c8c8;background:#fff"></div>
<div class="a" style="left:1197px;top:387px;width:77px;height:24px;border:1px solid #c8c8c8;background:#dae9db"></div>
<div class="t n" style="left:437px;top:393px;width:72.5px;text-align:right;color:#1e1e1e">17<i>.</i>271<i>,</i>23</div>
<div class="t n" style="left:665px;top:393px;width:72.5px;text-align:right;color:#1e1e1e">1<i>.</i>513<i>,</i>08</div>
<div class="t n" style="left:741px;top:393px;width:72.5px;text-align:right;color:#1e1e1e">2<i>.</i>426<i>,</i>11</div>
<div class="t n" style="left:817px;top:393px;width:72.5px;text-align:right;color:#1e1e1e">4<i>.</i>457<i>,</i>64</div>
<div class="t n" style="left:893px;top:393px;width:72.5px;text-align:right;color:#1e1e1e">7<i>.</i>464<i>,</i>92</div>
<div class="t n" style="left:969px;top:393px;width:72.5px;text-align:right;color:#1e1e1e">7<i>.</i>381<i>,</i>00</div>
<div class="t n" style="left:1045px;top:393px;width:72.5px;text-align:right;color:#1e1e1e">6<i>.</i>975<i>,</i>34</div>
<div class="t n" style="left:1121px;top:393px;width:72.5px;text-align:right;color:#1e1e1e">5<i>.</i>400<i>,</i>00</div>
<div class="t n" style="left:1197px;top:393px;width:72.5px;text-align:right;color:#1e1e1e">52<i>.</i>889<i>,</i>32</div>
<div class="a" style="left:437px;top:410px;width:77px;height:24px;border:1px solid #c8c8c8;background:#fff"></div>
<div class="a" style="left:513px;top:410px;width:77px;height:24px;border:1px solid #c8c8c8;background:#fff"></div>
<div class="a" style="left:589px;top:410px;width:77px;height:24px;border:1px solid #c8c8c8;background:#fff"></div>
<div class="a" style="left:665px;top:410px;width:77px;height:24px;border:1px solid #c8c8c8;background:#fff"></div>
<div class="a" style="left:741px;top:410px;width:77px;height:24px;border:1px solid #c8c8c8;background:#fff"></div>
<div class="a" style="left:817px;top:410px;width:77px;height:24px;border:1px solid #c8c8c8;background:#fff"></div>
<div class="a" style="left:893px;top:410px;width:77px;height:24px;border:1px solid #c8c8c8;background:#fff"></div>
<div class="a" style="left:969px;top:410px;width:77px;height:24px;border:1px solid #c8c8c8;background:#fff"></div>
<div class="a" style="left:1045px;top:410px;width:77px;height:24px;border:1px solid #c8c8c8;background:#fff"></div>
<div class="a" style="left:1121px;top:410px;width:77px;height:24px;border:1px solid #c8c8c8;background:#fff"></div>
<div class="a" style="left:1197px;top:410px;width:77px;height:24px;border:1px solid #c8c8c8;background:#dae9db"></div>
<div class="t n" style="left:437px;top:416px;width:72.5px;text-align:right;color:#1e1e1e">0<i>,</i>00</div>
<div class="t n" style="left:969px;top:416px;width:72.5px;text-align:right;color:#1e1e1e">6<i>.</i>000<i>,</i>00</div>
<div class="t n" style="left:1045px;top:416px;width:72.5px;text-align:right;color:#1e1e1e">0<i>,</i>00</div>
<div class="t n" style="left:1121px;top:416px;width:72.5px;text-align:right;color:#1e1e1e">0<i>,</i>00</div>
<div class="t n" style="left:1197px;top:416px;width:72.5px;text-align:right;color:#1e1e1e">6<i>.</i>000<i>,</i>00</div>
<div class="a" style="left:437px;top:433px;width:77px;height:24px;border:1px solid #c8c8c8;background:#fff"></div>
<div class="a" style="left:513px;top:433px;width:77px;height:24px;border:1px solid #c8c8c8;background:#fff"></div>
<div class="a" style="left:589px;top:433px;width:77px;height:24px;border:1px solid #c8c8c8;background:#fff"></div>
<div class="a" style="left:665px;top:433px;width:77px;height:24px;border:1px solid #c8c8c8;background:#fff"></div>
<div class="a" style="left:741px;top:433px;width:77px;height:24px;border:1px solid #c8c8c8;background:#fff"></div>
<div class="a" style="left:817px;top:433px;width:77px;height:24px;border:1px solid #c8c8c8;background:#fff"></div>
<div class="a" style="left:893px;top:433px;width:77px;height:24px;border:1px solid #c8c8c8;background:#fff"></div>
<div class="a" style="left:969px;top:433px;width:77px;height:24px;border:1px solid #c8c8c8;background:#fff"></div>
<div class="a" style="left:1045px;top:433px;width:77px;height:24px;border:1px solid #c8c8c8;background:#fff"></div>
<div class="a" style="left:1121px;top:433px;width:77px;height:24px;border:1px solid #c8c8c8;background:#fff"></div>
<div class="a" style="left:1197px;top:433px;width:77px;height:24px;border:1px solid #c8c8c8;background:#dae9db"></div>
<div class="t n" style="left:437px;top:439px;width:72.5px;text-align:right;color:#1e1e1e">9<i>.</i>333<i>,</i>34</div>
<div class="t n" style="left:1045px;top:439px;width:72.5px;text-align:right;color:#1e1e1e">333<i>,</i>33</div>
<div class="t n" style="left:1121px;top:439px;width:72.5px;text-align:right;color:#1e1e1e">333<i>,</i>33</div>
<div class="t n" style="left:1197px;top:439px;width:72.5px;text-align:right;color:#1e1e1e">10<i>.</i>000<i>,</i>00</div>
<div class="a" style="left:437px;top:456px;width:77px;height:24px;border:1px solid #c8c8c8;background:#dae9db"></div>
<div class="a" style="left:513px;top:456px;width:77px;height:24px;border:1px solid #c8c8c8;background:#dae9db"></div>
<div class="a" style="left:589px;top:456px;width:77px;height:24px;border:1px solid #c8c8c8;background:#dae9db"></div>
<div class="a" style="left:665px;top:456px;width:77px;height:24px;border:1px solid #c8c8c8;background:#dae9db"></div>
<div class="a" style="left:741px;top:456px;width:77px;height:24px;border:1px solid #c8c8c8;background:#dae9db"></div>
<div class="a" style="left:817px;top:456px;width:77px;height:24px;border:1px solid #c8c8c8;background:#dae9db"></div>
<div class="a" style="left:893px;top:456px;width:77px;height:24px;border:1px solid #c8c8c8;background:#dae9db"></div>
<div class="a" style="left:969px;top:456px;width:77px;height:24px;border:1px solid #c8c8c8;background:#dae9db"></div>
<div class="a" style="left:1045px;top:456px;width:77px;height:24px;border:1px solid #c8c8c8;background:#dae9db"></div>
<div class="a" style="left:1121px;top:456px;width:77px;height:24px;border:1px solid #c8c8c8;background:#dae9db"></div>
<div class="a" style="left:1197px;top:456px;width:77px;height:24px;border:1px solid #c8c8c8;background:#dae9db"></div>
<div class="t n" style="left:437px;top:462px;width:72.5px;text-align:right;color:#1e1e1e">27<i>.</i>271<i>,</i>25</div>
<div class="t n" style="left:665px;top:462px;width:72.5px;text-align:right;color:#1e1e1e">1<i>.</i>513<i>,</i>08</div>
<div class="t n" style="left:741px;top:462px;width:72.5px;text-align:right;color:#1e1e1e">2<i>.</i>426<i>,</i>11</div>
<div class="t n" style="left:817px;top:462px;width:72.5px;text-align:right;color:#1e1e1e">4<i>.</i>457<i>,</i>64</div>
<div class="t n" style="left:893px;top:462px;width:72.5px;text-align:right;color:#1e1e1e">7<i>.</i>464<i>,</i>92</div>
<div class="t n" style="left:969px;top:462px;width:72.5px;text-align:right;color:#1e1e1e">13<i>.</i>381<i>,</i>00</div>
<div class="t n" style="left:1045px;top:462px;width:72.5px;text-align:right;color:#1e1e1e">7<i>.</i>975<i>,</i>33</div>
<div class="t n" style="left:1121px;top:462px;width:72.5px;text-align:right;color:#1e1e1e">6<i>.</i>399<i>,</i>99</div>
<div class="t n" style="left:1197px;top:462px;width:72.5px;text-align:right;color:#1e1e1e">70<i>.</i>889<i>,</i>32</div>
<div class="a" style="left:437px;top:479px;width:77px;height:24px;border:1px solid #c8c8c8;background:#fff"></div>
<div class="a" style="left:513px;top:479px;width:77px;height:24px;border:1px solid #c8c8c8;background:#fff"></div>
<div class="a" style="left:589px;top:479px;width:77px;height:24px;border:1px solid #c8c8c8;background:#fff"></div>
<div class="a" style="left:665px;top:479px;width:77px;height:24px;border:1px solid #c8c8c8;background:#fff"></div>
<div class="a" style="left:741px;top:479px;width:77px;height:24px;border:1px solid #c8c8c8;background:#fff"></div>
<div class="a" style="left:817px;top:479px;width:77px;height:24px;border:1px solid #c8c8c8;background:#fff"></div>
<div class="a" style="left:893px;top:479px;width:77px;height:24px;border:1px solid #c8c8c8;background:#fff"></div>
<div class="a" style="left:969px;top:479px;width:77px;height:24px;border:1px solid #c8c8c8;background:#fff"></div>
<div class="a" style="left:1045px;top:479px;width:77px;height:24px;border:1px solid #c8c8c8;background:#fff"></div>
<div class="a" style="left:1121px;top:479px;width:77px;height:24px;border:1px solid #c8c8c8;background:#fff"></div>
<div class="a" style="left:1197px;top:479px;width:77px;height:24px;border:1px solid #c8c8c8;background:#dae9db"></div>
<div class="t n" style="left:437px;top:485px;width:72.5px;text-align:right;color:#1e1e1e">167<i>.</i>289<i>,</i>76</div>
<div class="t n" style="left:817px;top:485px;width:72.5px;text-align:right;color:#1e1e1e">18<i>.</i>031<i>,</i>40</div>
<div class="t n" style="left:893px;top:485px;width:72.5px;text-align:right;color:#1e1e1e">32<i>.</i>386<i>,</i>86</div>
<div class="t n" style="left:969px;top:485px;width:72.5px;text-align:right;color:#1e1e1e">30<i>.</i>886<i>,</i>86</div>
<div class="t n" style="left:1045px;top:485px;width:72.5px;text-align:right;color:#1e1e1e">30<i>.</i>886<i>,</i>86</div>
<div class="t n" style="left:1121px;top:485px;width:72.5px;text-align:right;color:#1e1e1e">30<i>.</i>886<i>,</i>86</div>
<div class="t n" style="left:1197px;top:485px;width:72.5px;text-align:right;color:#1e1e1e">310<i>.</i>368<i>,</i>60</div>
<div class="a" style="left:437px;top:502px;width:77px;height:24px;border:1px solid #c8c8c8;background:#fff"></div>
<div class="a" style="left:513px;top:502px;width:77px;height:24px;border:1px solid #c8c8c8;background:#fff"></div>
<div class="a" style="left:589px;top:502px;width:77px;height:24px;border:1px solid #c8c8c8;background:#fff"></div>
<div class="a" style="left:665px;top:502px;width:77px;height:24px;border:1px solid #c8c8c8;background:#fff"></div>
<div class="a" style="left:741px;top:502px;width:77px;height:24px;border:1px solid #c8c8c8;background:#fff"></div>
<div class="a" style="left:817px;top:502px;width:77px;height:24px;border:1px solid #c8c8c8;background:#fff"></div>
<div class="a" style="left:893px;top:502px;width:77px;height:24px;border:1px solid #c8c8c8;background:#fff"></div>
<div class="a" style="left:969px;top:502px;width:77px;height:24px;border:1px solid #c8c8c8;background:#fff"></div>
<div class="a" style="left:1045px;top:502px;width:77px;height:24px;border:1px solid #c8c8c8;background:#fff"></div>
<div class="a" style="left:1121px;top:502px;width:77px;height:24px;border:1px solid #c8c8c8;background:#fff"></div>
<div class="a" style="left:1197px;top:502px;width:77px;height:24px;border:1px solid #c8c8c8;background:#dae9db"></div>
<div class="t n" style="left:437px;top:508px;width:72.5px;text-align:right;color:#1e1e1e">344<i>.</i>789<i>,</i>69</div>
<div class="t n" style="left:513px;top:508px;width:72.5px;text-align:right;color:#1e1e1e">59<i>.</i>230<i>,</i>71</div>
<div class="t n" style="left:589px;top:508px;width:72.5px;text-align:right;color:#1e1e1e">58<i>.</i>233<i>,</i>06</div>
<div class="t n" style="left:665px;top:508px;width:72.5px;text-align:right;color:#1e1e1e">57<i>.</i>557<i>,</i>56</div>
<div class="t n" style="left:741px;top:508px;width:72.5px;text-align:right;color:#1e1e1e">56<i>.</i>949<i>,</i>61</div>
<div class="t n" style="left:817px;top:508px;width:72.5px;text-align:right;color:#1e1e1e">19<i>.</i>396<i>,</i>95</div>
<div class="t n" style="left:893px;top:508px;width:72.5px;text-align:right;color:#1e1e1e">6<i>.</i>136<i>,</i>19</div>
<div class="t n" style="left:969px;top:508px;width:72.5px;text-align:right;color:#1e1e1e">5<i>.</i>147<i>,</i>81</div>
<div class="t n" style="left:1045px;top:508px;width:72.5px;text-align:right;color:#1e1e1e">5<i>.</i>147<i>,</i>81</div>
<div class="t n" style="left:1121px;top:508px;width:72.5px;text-align:right;color:#1e1e1e">5<i>.</i>147<i>,</i>81</div>
<div class="t n" style="left:1197px;top:508px;width:72.5px;text-align:right;color:#1e1e1e">617<i>.</i>737<i>,</i>20</div>
<div class="a" style="left:437px;top:525px;width:77px;height:24px;border:1px solid #c8c8c8;background:#fff"></div>
<div class="a" style="left:513px;top:525px;width:77px;height:24px;border:1px solid #c8c8c8;background:#fff"></div>
<div class="a" style="left:589px;top:525px;width:77px;height:24px;border:1px solid #c8c8c8;background:#fff"></div>
<div class="a" style="left:665px;top:525px;width:77px;height:24px;border:1px solid #c8c8c8;background:#fff"></div>
<div class="a" style="left:741px;top:525px;width:77px;height:24px;border:1px solid #c8c8c8;background:#fff"></div>
<div class="a" style="left:817px;top:525px;width:77px;height:24px;border:1px solid #c8c8c8;background:#fff"></div>
<div class="a" style="left:893px;top:525px;width:77px;height:24px;border:1px solid #c8c8c8;background:#fff"></div>
<div class="a" style="left:969px;top:525px;width:77px;height:24px;border:1px solid #c8c8c8;background:#fff"></div>
<div class="a" style="left:1045px;top:525px;width:77px;height:24px;border:1px solid #c8c8c8;background:#fff"></div>
<div class="a" style="left:1121px;top:525px;width:77px;height:24px;border:1px solid #c8c8c8;background:#fff"></div>
<div class="a" style="left:1197px;top:525px;width:77px;height:24px;border:1px solid #c8c8c8;background:#dae9db"></div>
<div class="t n" style="left:741px;top:531px;width:72.5px;text-align:right;color:#1e1e1e">503<i>,</i>34</div>
<div class="t n" style="left:817px;top:531px;width:72.5px;text-align:right;color:#1e1e1e">503<i>,</i>34</div>
<div class="t n" style="left:893px;top:531px;width:72.5px;text-align:right;color:#1e1e1e">503<i>,</i>34</div>
<div class="t n" style="left:1197px;top:531px;width:72.5px;text-align:right;color:#1e1e1e">1<i>.</i>510<i>,</i>02</div>
<div class="a" style="left:437px;top:548px;width:77px;height:24px;border:1px solid #c8c8c8;background:#fff"></div>
<div class="a" style="left:513px;top:548px;width:77px;height:24px;border:1px solid #c8c8c8;background:#fff"></div>
<div class="a" style="left:589px;top:548px;width:77px;height:24px;border:1px solid #c8c8c8;background:#fff"></div>
<div class="a" style="left:665px;top:548px;width:77px;height:24px;border:1px solid #c8c8c8;background:#fff"></div>
<div class="a" style="left:741px;top:548px;width:77px;height:24px;border:1px solid #c8c8c8;background:#fff"></div>
<div class="a" style="left:817px;top:548px;width:77px;height:24px;border:1px solid #c8c8c8;background:#fff"></div>
<div class="a" style="left:893px;top:548px;width:77px;height:24px;border:1px solid #c8c8c8;background:#fff"></div>
<div class="a" style="left:969px;top:548px;width:77px;height:24px;border:1px solid #c8c8c8;background:#fff"></div>
<div class="a" style="left:1045px;top:548px;width:77px;height:24px;border:1px solid #c8c8c8;background:#fff"></div>
<div class="a" style="left:1121px;top:548px;width:77px;height:24px;border:1px solid #c8c8c8;background:#fff"></div>
<div class="a" style="left:1197px;top:548px;width:77px;height:24px;border:1px solid #c8c8c8;background:#dae9db"></div>
<div class="t n" style="left:437px;top:554px;width:72.5px;text-align:right;color:#1e1e1e">12<i>.</i>000<i>,</i>00</div>
<div class="t n" style="left:969px;top:554px;width:72.5px;text-align:right;color:#1e1e1e">0<i>,</i>00</div>
<div class="t n" style="left:1045px;top:554px;width:72.5px;text-align:right;color:#1e1e1e">4<i>.</i>000<i>,</i>00</div>
<div class="t n" style="left:1121px;top:554px;width:72.5px;text-align:right;color:#1e1e1e">4<i>.</i>000<i>,</i>00</div>
<div class="t n" style="left:1197px;top:554px;width:72.5px;text-align:right;color:#1e1e1e">20<i>.</i>000<i>,</i>00</div>
<div class="a" style="left:437px;top:571px;width:77px;height:24px;border:1px solid #c8c8c8;background:#fff"></div>
<div class="a" style="left:513px;top:571px;width:77px;height:24px;border:1px solid #c8c8c8;background:#fff"></div>
<div class="a" style="left:589px;top:571px;width:77px;height:24px;border:1px solid #c8c8c8;background:#fff"></div>
<div class="a" style="left:665px;top:571px;width:77px;height:24px;border:1px solid #c8c8c8;background:#fff"></div>
<div class="a" style="left:741px;top:571px;width:77px;height:24px;border:1px solid #c8c8c8;background:#fff"></div>
<div class="a" style="left:817px;top:571px;width:77px;height:24px;border:1px solid #c8c8c8;background:#fff"></div>
<div class="a" style="left:893px;top:571px;width:77px;height:24px;border:1px solid #c8c8c8;background:#fff"></div>
<div class="a" style="left:969px;top:571px;width:77px;height:24px;border:1px solid #c8c8c8;background:#fff"></div>
<div class="a" style="left:1045px;top:571px;width:77px;height:24px;border:1px solid #c8c8c8;background:#fff"></div>
<div class="a" style="left:1121px;top:571px;width:77px;height:24px;border:1px solid #c8c8c8;background:#fff"></div>
<div class="a" style="left:1197px;top:571px;width:77px;height:24px;border:1px solid #c8c8c8;background:#dae9db"></div>
<div class="t n" style="left:437px;top:577px;width:72.5px;text-align:right;color:#1e1e1e">4<i>.</i>182<i>,</i>99</div>
<div class="t n" style="left:513px;top:577px;width:72.5px;text-align:right;color:#1e1e1e">1<i>.</i>293<i>,</i>83</div>
<div class="t n" style="left:589px;top:577px;width:72.5px;text-align:right;color:#1e1e1e">992<i>,</i>31</div>
<div class="t n" style="left:1197px;top:577px;width:72.5px;text-align:right;color:#1e1e1e">6<i>.</i>469<i>,</i>13</div>
<div class="a" style="left:437px;top:594px;width:77px;height:24px;border:1px solid #c8c8c8;background:#fff"></div>
<div class="a" style="left:513px;top:594px;width:77px;height:24px;border:1px solid #c8c8c8;background:#fff"></div>
<div class="a" style="left:589px;top:594px;width:77px;height:24px;border:1px solid #c8c8c8;background:#fff"></div>
<div class="a" style="left:665px;top:594px;width:77px;height:24px;border:1px solid #c8c8c8;background:#fff"></div>
<div class="a" style="left:741px;top:594px;width:77px;height:24px;border:1px solid #c8c8c8;background:#fff"></div>
<div class="a" style="left:817px;top:594px;width:77px;height:24px;border:1px solid #c8c8c8;background:#fff"></div>
<div class="a" style="left:893px;top:594px;width:77px;height:24px;border:1px solid #c8c8c8;background:#fff"></div>
<div class="a" style="left:969px;top:594px;width:77px;height:24px;border:1px solid #c8c8c8;background:#fff"></div>
<div class="a" style="left:1045px;top:594px;width:77px;height:24px;border:1px solid #c8c8c8;background:#fff"></div>
<div class="a" style="left:1121px;top:594px;width:77px;height:24px;border:1px solid #c8c8c8;background:#fff"></div>
<div class="a" style="left:1197px;top:594px;width:77px;height:24px;border:1px solid #c8c8c8;background:#dae9db"></div>
<div class="t n" style="left:437px;top:600px;width:72.5px;text-align:right;color:#1e1e1e">12<i>.</i>785<i>,</i>13</div>
<div class="t n" style="left:969px;top:600px;width:72.5px;text-align:right;color:#1e1e1e">6<i>.</i>392<i>,</i>56</div>
<div class="t n" style="left:1045px;top:600px;width:72.5px;text-align:right;color:#1e1e1e">6<i>.</i>392<i>,</i>56</div>
<div class="t n" style="left:1121px;top:600px;width:72.5px;text-align:right;color:#1e1e1e">6<i>.</i>392<i>,</i>56</div>
<div class="t n" style="left:1197px;top:600px;width:72.5px;text-align:right;color:#1e1e1e">31<i>.</i>962<i>,</i>81</div>
<div class="a" style="left:437px;top:617px;width:77px;height:24px;border:1px solid #c8c8c8;background:#dae9db"></div>
<div class="a" style="left:513px;top:617px;width:77px;height:24px;border:1px solid #c8c8c8;background:#dae9db"></div>
<div class="a" style="left:589px;top:617px;width:77px;height:24px;border:1px solid #c8c8c8;background:#dae9db"></div>
<div class="a" style="left:665px;top:617px;width:77px;height:24px;border:1px solid #c8c8c8;background:#dae9db"></div>
<div class="a" style="left:741px;top:617px;width:77px;height:24px;border:1px solid #c8c8c8;background:#dae9db"></div>
<div class="a" style="left:817px;top:617px;width:77px;height:24px;border:1px solid #c8c8c8;background:#dae9db"></div>
<div class="a" style="left:893px;top:617px;width:77px;height:24px;border:1px solid #c8c8c8;background:#dae9db"></div>
<div class="a" style="left:969px;top:617px;width:77px;height:24px;border:1px solid #c8c8c8;background:#dae9db"></div>
<div class="a" style="left:1045px;top:617px;width:77px;height:24px;border:1px solid #c8c8c8;background:#dae9db"></div>
<div class="a" style="left:1121px;top:617px;width:77px;height:24px;border:1px solid #c8c8c8;background:#dae9db"></div>
<div class="a" style="left:1197px;top:617px;width:77px;height:24px;border:1px solid #c8c8c8;background:#dae9db"></div>
<div class="t n" style="left:437px;top:623px;width:72.5px;text-align:right;color:#1e1e1e">1<i>.</i>871<i>.</i>950<i>,</i>56</div>
<div class="t n" style="left:513px;top:623px;width:72.5px;text-align:right;color:#1e1e1e">64<i>.</i>124<i>,</i>54</div>
<div class="t n" style="left:589px;top:623px;width:72.5px;text-align:right;color:#1e1e1e">62<i>.</i>825<i>,</i>37</div>
<div class="t n" style="left:665px;top:623px;width:72.5px;text-align:right;color:#1e1e1e">62<i>.</i>670<i>,</i>64</div>
<div class="t n" style="left:741px;top:623px;width:72.5px;text-align:right;color:#1e1e1e">63<i>.</i>479<i>,</i>06</div>
<div class="t n" style="left:817px;top:623px;width:72.5px;text-align:right;color:#1e1e1e">46<i>.</i>156<i>,</i>00</div>
<div class="t n" style="left:893px;top:623px;width:72.5px;text-align:right;color:#1e1e1e">52<i>.</i>431<i>,</i>46</div>
<div class="t n" style="left:969px;top:623px;width:72.5px;text-align:right;color:#1e1e1e">67<i>.</i>039<i>,</i>81</div>
<div class="t n" style="left:1045px;top:623px;width:72.5px;text-align:right;color:#1e1e1e">103<i>.</i>627<i>,</i>30</div>
<div class="t n" style="left:1121px;top:623px;width:72.5px;text-align:right;color:#1e1e1e">122<i>.</i>812<i>,</i>15</div>
<div class="t n" style="left:1197px;top:623px;width:72.5px;text-align:right;color:#1e1e1e">2<i>.</i>517<i>.</i>116<i>,</i>89</div>
<div class="a" style="left:30px;top:272px;width:408px;height:1px;background:#a0a0a0"></div>
<div class="a" style="left:30px;top:295px;width:408px;height:1px;background:#a0a0a0"></div>
<div class="a" style="left:30px;top:318px;width:408px;height:1px;background:#a0a0a0"></div>
<div class="a" style="left:30px;top:341px;width:408px;height:1px;background:#a0a0a0"></div>
<div class="a" style="left:30px;top:364px;width:408px;height:1px;background:#a0a0a0"></div>
<div class="a" style="left:337px;top:387px;width:101px;height:1px;background:#a0a0a0"></div>
<div class="a" style="left:337px;top:410px;width:101px;height:1px;background:#a0a0a0"></div>
<div class="a" style="left:337px;top:433px;width:101px;height:1px;background:#a0a0a0"></div>
<div class="a" style="left:169px;top:456px;width:269px;height:1px;background:#a0a0a0"></div>
<div class="a" style="left:30px;top:479px;width:408px;height:1px;background:#a0a0a0"></div>
<div class="a" style="left:30px;top:502px;width:408px;height:1px;background:#a0a0a0"></div>
<div class="a" style="left:30px;top:525px;width:408px;height:1px;background:#a0a0a0"></div>
<div class="a" style="left:30px;top:548px;width:408px;height:1px;background:#a0a0a0"></div>
<div class="a" style="left:30px;top:571px;width:408px;height:1px;background:#a0a0a0"></div>
<div class="a" style="left:30px;top:594px;width:408px;height:1px;background:#a0a0a0"></div>
<div class="a" style="left:30px;top:617px;width:408px;height:1px;background:#a0a0a0"></div>
<div class="a" style="left:30px;top:640px;width:408px;height:1px;background:#a0a0a0"></div>
<div class="a" style="left:169px;top:272px;width:1px;height:345px;background:#a0a0a0"></div>
<div class="a" style="left:337px;top:272px;width:1px;height:184px;background:#a0a0a0"></div>
<div class="a" style="left:337px;top:479px;width:1px;height:138px;background:#a0a0a0"></div>
<div class="a" style="left:437px;top:249px;width:1px;height:391px;background:#a0a0a0"></div>
<div class="a" style="left:1273px;top:249px;width:1px;height:392px;background:#a0a0a0"></div>
<svg class="a" style="left:36px;top:281px" width="9" height="7" viewBox="0 0 9 7"><path d="M1 1.3 L4.5 4.8 L8 1.3" stroke="#202020" stroke-width="1.6" fill="none"/></svg>
<div class="t" style="left:50px;top:278px;color:#5e5e5e">210009</div>
<svg class="a" style="left:176px;top:281px" width="9" height="7" viewBox="0 0 9 7"><path d="M1 1.3 L4.5 4.8 L8 1.3" stroke="#202020" stroke-width="1.6" fill="none"/></svg>
<div class="t" style="left:190px;top:278px;color:#5e5e5e">Afschr. op kosten van onde...</div>
<div class="t" style="left:342px;top:278px;color:#5e5e5e">630100</div>
<svg class="a" style="left:36px;top:304px" width="9" height="7" viewBox="0 0 9 7"><path d="M1 1.3 L4.5 4.8 L8 1.3" stroke="#202020" stroke-width="1.6" fill="none"/></svg>
<div class="t" style="left:50px;top:301px;color:#5e5e5e">211009</div>
<svg class="a" style="left:176px;top:304px" width="9" height="7" viewBox="0 0 9 7"><path d="M1 1.3 L4.5 4.8 L8 1.3" stroke="#202020" stroke-width="1.6" fill="none"/></svg>
<div class="t" style="left:190px;top:301px;color:#5e5e5e">Afschr./waardevermind. co...</div>
<div class="t" style="left:342px;top:301px;color:#5e5e5e">630100</div>
<svg class="a" style="left:36px;top:327px" width="9" height="7" viewBox="0 0 9 7"><path d="M1 1.3 L4.5 4.8 L8 1.3" stroke="#202020" stroke-width="1.6" fill="none"/></svg>
<div class="t" style="left:50px;top:324px;color:#5e5e5e">221009</div>
<svg class="a" style="left:176px;top:327px" width="9" height="7" viewBox="0 0 9 7"><path d="M1 1.3 L4.5 4.8 L8 1.3" stroke="#202020" stroke-width="1.6" fill="none"/></svg>
<div class="t" style="left:190px;top:324px;color:#5e5e5e">Afschrijvingen en waardeve...</div>
<div class="t" style="left:342px;top:324px;color:#5e5e5e">630220</div>
<svg class="a" style="left:36px;top:350px" width="9" height="7" viewBox="0 0 9 7"><path d="M1 1.3 L4.5 4.8 L8 1.3" stroke="#202020" stroke-width="1.6" fill="none"/></svg>
<div class="t" style="left:50px;top:347px;color:#5e5e5e">230009</div>
<svg class="a" style="left:176px;top:350px" width="9" height="7" viewBox="0 0 9 7"><path d="M1 1.3 L4.5 4.8 L8 1.3" stroke="#202020" stroke-width="1.6" fill="none"/></svg>
<div class="t" style="left:190px;top:347px;color:#5e5e5e">Geboekte afschrijvingen op ...</div>
<div class="t" style="left:342px;top:347px;color:#5e5e5e">630230</div>
<svg class="a" style="left:36px;top:373px" width="9" height="7" viewBox="0 0 9 7"><path d="M1 1.3 L4.5 4.8 L8 1.3" stroke="#202020" stroke-width="1.6" fill="none"/></svg>
<div class="t" style="left:50px;top:370px;color:#5e5e5e">231009</div>
<svg class="a" style="left:176px;top:373px" width="9" height="7" viewBox="0 0 9 7"><path d="M1 1.3 L4.5 4.8 L8 1.3" stroke="#202020" stroke-width="1.6" fill="none"/></svg>
<div class="t" style="left:190px;top:370px;color:#5e5e5e">Afschr. en waardevermind. ...</div>
<div class="t" style="left:342px;top:370px;color:#5e5e5e">630200</div>
<div class="t" style="left:342px;top:393px;color:#5e5e5e">630230</div>
<div class="t" style="left:342px;top:416px;color:#5e5e5e">630260</div>
<div class="t" style="left:342px;top:439px;color:#5e5e5e">630900</div>
<div class="t" style="left:174px;top:462px;color:#5e5e5e">Afschr. en waardevermind. op andere installaties To...</div>
<svg class="a" style="left:36px;top:488px" width="9" height="7" viewBox="0 0 9 7"><path d="M1 1.3 L4.5 4.8 L8 1.3" stroke="#202020" stroke-width="1.6" fill="none"/></svg>
<div class="t" style="left:50px;top:485px;color:#5e5e5e">232009</div>
<svg class="a" style="left:176px;top:488px" width="9" height="7" viewBox="0 0 9 7"><path d="M1 1.3 L4.5 4.8 L8 1.3" stroke="#202020" stroke-width="1.6" fill="none"/></svg>
<div class="t" style="left:190px;top:485px;color:#5e5e5e">Afschrijvingen van uitrusting</div>
<div class="t" style="left:342px;top:485px;color:#5e5e5e">630230</div>
<svg class="a" style="left:36px;top:511px" width="9" height="7" viewBox="0 0 9 7"><path d="M1 1.3 L4.5 4.8 L8 1.3" stroke="#202020" stroke-width="1.6" fill="none"/></svg>
<div class="t" style="left:50px;top:508px;color:#5e5e5e">240019</div>
<svg class="a" style="left:176px;top:511px" width="9" height="7" viewBox="0 0 9 7"><path d="M1 1.3 L4.5 4.8 L8 1.3" stroke="#202020" stroke-width="1.6" fill="none"/></svg>
<div class="t" style="left:190px;top:508px;color:#5e5e5e">Afschr. bureelmeubilair</div>
<div class="t" style="left:342px;top:508px;color:#5e5e5e">630230</div>
<svg class="a" style="left:36px;top:534px" width="9" height="7" viewBox="0 0 9 7"><path d="M1 1.3 L4.5 4.8 L8 1.3" stroke="#202020" stroke-width="1.6" fill="none"/></svg>
<div class="t" style="left:50px;top:531px;color:#5e5e5e">240029</div>
<svg class="a" style="left:176px;top:534px" width="9" height="7" viewBox="0 0 9 7"><path d="M1 1.3 L4.5 4.8 L8 1.3" stroke="#202020" stroke-width="1.6" fill="none"/></svg>
<div class="t" style="left:190px;top:531px;color:#5e5e5e">Afschr. kantoormaterieel</div>
<div class="t" style="left:342px;top:531px;color:#5e5e5e">630240</div>
<svg class="a" style="left:36px;top:557px" width="9" height="7" viewBox="0 0 9 7"><path d="M1 1.3 L4.5 4.8 L8 1.3" stroke="#202020" stroke-width="1.6" fill="none"/></svg>
<div class="t" style="left:50px;top:554px;color:#5e5e5e">241009</div>
<svg class="a" style="left:176px;top:557px" width="9" height="7" viewBox="0 0 9 7"><path d="M1 1.3 L4.5 4.8 L8 1.3" stroke="#202020" stroke-width="1.6" fill="none"/></svg>
<div class="t" style="left:190px;top:554px;color:#5e5e5e">Afschr. personenw. en soor...</div>
<div class="t" style="left:342px;top:554px;color:#5e5e5e">630241</div>
<svg class="a" style="left:36px;top:580px" width="9" height="7" viewBox="0 0 9 7"><path d="M1 1.3 L4.5 4.8 L8 1.3" stroke="#202020" stroke-width="1.6" fill="none"/></svg>
<div class="t" style="left:50px;top:577px;color:#5e5e5e">241609</div>
<svg class="a" style="left:176px;top:580px" width="9" height="7" viewBox="0 0 9 7"><path d="M1 1.3 L4.5 4.8 L8 1.3" stroke="#202020" stroke-width="1.6" fill="none"/></svg>
<div class="t" style="left:190px;top:577px;color:#5e5e5e">TEST Afschrijvingen</div>
<div class="t" style="left:342px;top:577px;color:#5e5e5e">630261</div>
<svg class="a" style="left:36px;top:603px" width="9" height="7" viewBox="0 0 9 7"><path d="M1 1.3 L4.5 4.8 L8 1.3" stroke="#202020" stroke-width="1.6" fill="none"/></svg>
<div class="t" style="left:50px;top:600px;color:#5e5e5e">242009</div>
<svg class="a" style="left:176px;top:603px" width="9" height="7" viewBox="0 0 9 7"><path d="M1 1.3 L4.5 4.8 L8 1.3" stroke="#202020" stroke-width="1.6" fill="none"/></svg>
<div class="t" style="left:190px;top:600px;color:#5e5e5e">Geb. afschr. personenw./so...</div>
<div class="t" style="left:342px;top:600px;color:#5e5e5e">630241</div>
<div class="t" style="left:33px;top:623px;color:#5e5e5e">Eindtotaal</div>
<div class="a" style="left:141px;top:25px;width:89px;height:32px;border:4px solid #f7962e;box-shadow:2px 2px 4px rgba(0,0,0,.45), inset 2px 2px 3px rgba(0,0,0,.35)"></div>
<div class="a" style="left:592px;top:105px;width:100px;height:30px;border:4px solid #f7962e;box-shadow:2px 2px 4px rgba(0,0,0,.45), inset 2px 2px 3px rgba(0,0,0,.35)"></div>
<div class="a" style="left:508px;top:247px;width:693px;height:32px;border:4px solid #f7962e;box-shadow:2px 2px 4px rgba(0,0,0,.45), inset 2px 2px 3px rgba(0,0,0,.35)"></div>
<svg class="a" style="left:0;top:0" width="1403" height="677"><defs><filter id="sh" x="-10%" y="-50%" width="120%" height="200%"><feGaussianBlur stdDeviation="1.5"/></filter></defs><g transform="translate(2,2)" opacity=".45" filter="url(#sh)"><line x1="251" y1="48.5" x2="570" y2="106" stroke="#000" stroke-width="3.6"/><polygon points="568,100 566,111 584.5,108.6" fill="#000"/></g><line x1="251" y1="48.5" x2="570" y2="106" stroke="#f7962e" stroke-width="3.6"/><polygon points="568,99.5 566,111.5 585,108.6" fill="#f7962e"/></svg>
</body></html>
